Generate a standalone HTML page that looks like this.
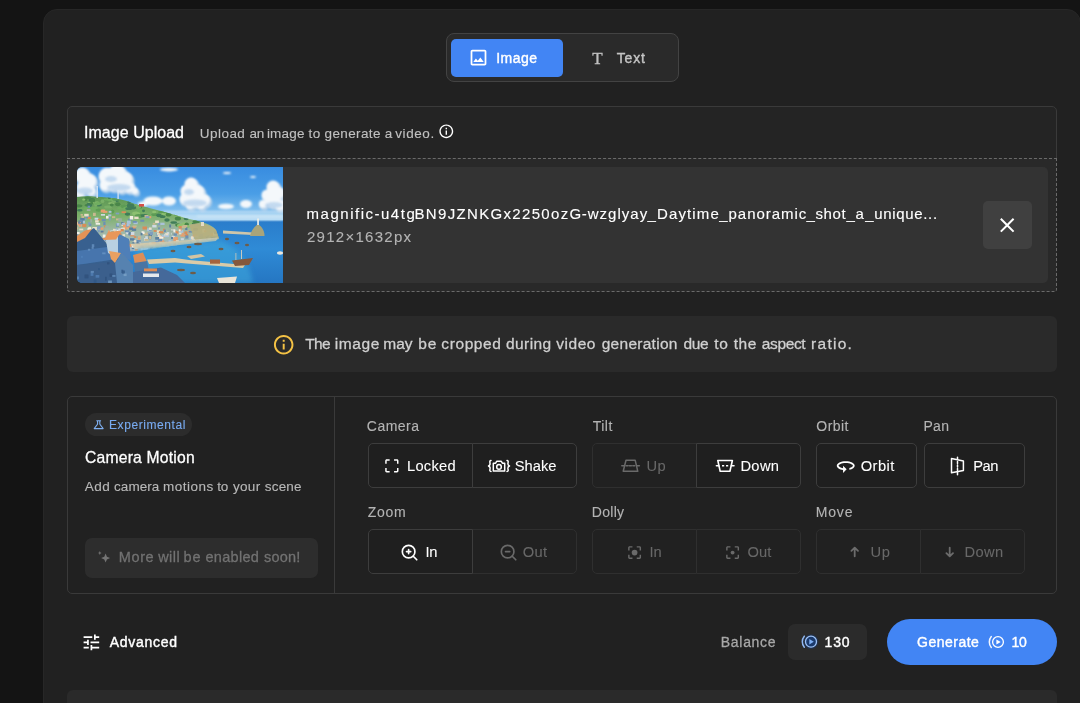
<!DOCTYPE html>
<html lang="en">
<head>
<meta charset="utf-8">
<title>Image to Video</title>
<style>
html,body{margin:0;padding:0;}
body{width:1080px;height:703px;overflow:hidden;background:#141414;position:relative;font-family:"Liberation Sans",sans-serif;}
.b{position:absolute;box-sizing:border-box;}
.t{position:absolute;white-space:pre;font-family:"Liberation Sans",sans-serif;}
svg{position:absolute;overflow:visible;}
.panel{left:43px;top:9px;width:1038px;height:720px;background:#212121;border:1px solid #272727;border-radius:14px;}
.toggle{left:446px;top:33px;width:233px;height:49px;background:#2a2a2a;border:1px solid #434343;border-radius:8px;}
.tog-on{left:451px;top:39px;width:112px;height:38px;background:#4285f4;border-radius:5px;}
.card{border:1px solid #3a3a3a;border-radius:5px;}
.upload{left:67px;top:106px;width:990px;height:186px;background:#242424;}
.dashbox{left:67px;top:158px;width:990px;height:134px;border:1px dashed #6a6a6a;border-radius:0 0 3px 3px;background:#292929;}
.filerow{left:77px;top:167px;width:971px;height:116px;background:#333333;border-radius:5px;}
.xbtn{left:983px;top:201px;width:49px;height:48px;background:#404040;border-radius:5px;}
.warn{left:67px;top:316px;width:990px;height:56px;background:#2a2a2a;border-radius:6px;}
.motion{left:67px;top:396px;width:990px;height:198px;}
.vdiv{left:334px;top:397px;width:1px;height:196px;background:#3a3a3a;}
.pill{left:85px;top:413px;width:107px;height:23px;background:#2c2c2c;border-radius:12px;}
.soon{left:85px;top:538px;width:233px;height:40px;background:#2d2d2d;border-radius:7px;}
.grp{height:45px;border-radius:5px;}
.on{border:1px solid #3d3d3d;background:#1f1f1f;}
.off{border:1px solid #2f2f2f;background:#212121;}
.chip{left:788px;top:624px;width:79px;height:36px;background:#2b2b2b;border-radius:7px;}
.gen{left:887px;top:619px;width:170px;height:46px;background:#4285f4;border-radius:23px;}
.next{left:67px;top:690px;width:990px;height:30px;background:#2a2a2a;border-radius:6px 6px 0 0;}
.tl{position:absolute;left:0;top:0;width:1080px;height:703px;will-change:transform;}
.ln{margin:0;padding:0;height:0;line-height:0;font-size:0;}

</style>
</head>
<body>
<div class="b panel"></div>

<!-- mode toggle -->
<div class="b toggle"></div>
<div class="b tog-on"></div>

<!-- upload card -->
<div class="b card upload"></div>
<div class="b dashbox"></div>
<div class="b filerow"></div>
<div class="b xbtn"></div>

<!-- warning -->
<div class="b warn"></div>

<!-- camera motion card -->
<div class="b card motion"></div>
<div class="b vdiv"></div>
<div class="b pill"></div>
<div class="b soon"></div>

<!-- button groups: row 1 y=443, row 2 y=529 -->
<div class="b grp on"  style="left:368px;top:443px;width:105px;border-radius:5px 0 0 5px;"></div>
<div class="b grp on"  style="left:472px;top:443px;width:105px;border-radius:0 5px 5px 0;"></div>
<div class="b grp off" style="left:592px;top:443px;width:105px;border-radius:5px 0 0 5px;"></div>
<div class="b grp on"  style="left:696px;top:443px;width:105px;border-radius:0 5px 5px 0;"></div>
<div class="b grp on"  style="left:816px;top:443px;width:101px;"></div>
<div class="b grp on"  style="left:924px;top:443px;width:101px;"></div>

<div class="b grp off" style="left:472px;top:529px;width:105px;border-radius:0 5px 5px 0;"></div>
<div class="b grp on"  style="left:368px;top:529px;width:105px;border-radius:5px 0 0 5px;"></div>
<div class="b grp off" style="left:592px;top:529px;width:105px;border-radius:5px 0 0 5px;"></div>
<div class="b grp off" style="left:696px;top:529px;width:105px;border-radius:0 5px 5px 0;"></div>
<div class="b grp off" style="left:816px;top:529px;width:105px;border-radius:5px 0 0 5px;"></div>
<div class="b grp off" style="left:920px;top:529px;width:105px;border-radius:0 5px 5px 0;"></div>

<!-- bottom row -->
<div class="b chip"></div>
<div class="b gen"></div>
<div class="b next"></div>
<!-- ===== thumbnail (harbour town painting) ===== -->
<svg style="left:77px;top:167px;overflow:hidden;border-radius:5px 0 0 5px" width="206" height="116" viewBox="0 0 206 116">
<defs>
<linearGradient id="sky" x1="0" y1="0" x2="0" y2="1"><stop offset="0" stop-color="#388ce0"/><stop offset="0.5" stop-color="#4a9ee6"/><stop offset="0.85" stop-color="#86c2ee"/><stop offset="1" stop-color="#a8d6f4"/></linearGradient>
<linearGradient id="sea" x1="0" y1="0" x2="0" y2="1"><stop offset="0" stop-color="#2a7ccb"/><stop offset="0.45" stop-color="#2f8bd6"/><stop offset="1" stop-color="#2576c2"/></linearGradient>
<linearGradient id="hill" x1="0" y1="0" x2="0" y2="1"><stop offset="0" stop-color="#5a9452"/><stop offset="0.35" stop-color="#7cb06a"/><stop offset="0.6" stop-color="#9db8a4"/><stop offset="1" stop-color="#a9bccc"/></linearGradient>
<filter id="b1" x="-20%" y="-20%" width="140%" height="140%"><feGaussianBlur stdDeviation="0.9"/></filter>
<filter id="b2" x="-20%" y="-20%" width="140%" height="140%"><feGaussianBlur stdDeviation="2.4"/></filter>
<filter id="b05" x="-20%" y="-20%" width="140%" height="140%"><feGaussianBlur stdDeviation="0.5"/></filter>
<clipPath id="hc"><path d="M0 30 C8 28.500 18 29.500 30 30.500 C40 31 48 33 58 37 C74 42 92 45.500 108 51 C122 54.500 134 56 139 63 L142 72 L60 84 L0 86 Z"/></clipPath>
</defs>
<rect width="206" height="54" fill="url(#sky)"/>
<rect y="53.400" width="206" height="63" fill="url(#sea)"/>
<rect x="84" y="47" width="122" height="6.600" fill="#c4e2f6" opacity="0.75" filter="url(#b1)"/>
<g fill="#b4d0ea" filter="url(#b1)">
<circle cx="6.5" cy="10.2" r="8"/>
<circle cx="13.5" cy="16.2" r="8"/>
<circle cx="7.5" cy="22.2" r="7"/>
<circle cx="15.5" cy="26.2" r="5"/>
<circle cx="4.5" cy="29.2" r="4.5"/>
<circle cx="31.5" cy="11.2" r="9"/>
<circle cx="41.5" cy="9.2" r="10"/>
<circle cx="49.5" cy="14.2" r="8"/>
<circle cx="37.5" cy="18.2" r="8"/>
<circle cx="29.5" cy="20.2" r="6"/>
<circle cx="53.5" cy="22.2" r="6"/>
<circle cx="45.5" cy="22.2" r="6"/>
<circle cx="59.5" cy="26.2" r="3.5"/>
<circle cx="115.5" cy="19.2" r="7"/>
<circle cx="111.5" cy="26.2" r="7"/>
<circle cx="121.5" cy="27.2" r="8"/>
<circle cx="109.5" cy="34.2" r="6"/>
<circle cx="118.5" cy="35.2" r="8"/>
<circle cx="128.5" cy="35.2" r="6.5"/>
<circle cx="114.5" cy="40.2" r="4.5"/>
<circle cx="125.5" cy="40.2" r="4.5"/>
<circle cx="197.5" cy="22.2" r="7"/>
<circle cx="202.5" cy="28.2" r="7"/>
<circle cx="191.5" cy="30.2" r="6"/>
<circle cx="197.5" cy="35.2" r="8"/>
<circle cx="187.5" cy="39.2" r="4.5"/>
<circle cx="204.5" cy="40.2" r="6"/>
</g>
<g fill="#f4f8fb" filter="url(#b1)">
<circle cx="5" cy="8" r="7.4"/>
<circle cx="12" cy="14" r="7.4"/>
<circle cx="6" cy="20" r="6.4"/>
<circle cx="14" cy="24" r="4.6"/>
<circle cx="3" cy="27" r="4.1"/>
<circle cx="30" cy="9" r="8.3"/>
<circle cx="40" cy="7" r="9.2"/>
<circle cx="48" cy="12" r="7.4"/>
<circle cx="36" cy="16" r="7.4"/>
<circle cx="28" cy="18" r="5.5"/>
<circle cx="52" cy="20" r="5.5"/>
<circle cx="44" cy="20" r="5.5"/>
<circle cx="58" cy="24" r="3.2"/>
<circle cx="114" cy="17" r="6.4"/>
<circle cx="110" cy="24" r="6.4"/>
<circle cx="120" cy="25" r="7.4"/>
<circle cx="108" cy="32" r="5.5"/>
<circle cx="117" cy="33" r="7.4"/>
<circle cx="127" cy="33" r="6"/>
<circle cx="113" cy="38" r="4.1"/>
<circle cx="124" cy="38" r="4.1"/>
<circle cx="196" cy="20" r="6.4"/>
<circle cx="201" cy="26" r="6.4"/>
<circle cx="190" cy="28" r="5.5"/>
<circle cx="196" cy="33" r="7.4"/>
<circle cx="186" cy="37" r="4.1"/>
<circle cx="203" cy="38" r="5.5"/>
<ellipse cx="149" cy="39.500" rx="8" ry="2.800"/><ellipse cx="169" cy="37" rx="6" ry="4"/><ellipse cx="92" cy="34" rx="7" ry="4.500"/><ellipse cx="76" cy="34" rx="9.500" ry="4.500"/><ellipse cx="66" cy="37" rx="5" ry="2.500"/>
<ellipse cx="92" cy="2.600" rx="9" ry="1.800"/><ellipse cx="150" cy="6" rx="4" ry="1"/><ellipse cx="176" cy="10" rx="3" ry="1"/>
</g>
<g fill="#a4c6e8" opacity="0.6" filter="url(#b1)"><ellipse cx="42" cy="20.500" rx="12" ry="3.500"/><ellipse cx="118" cy="36" rx="12" ry="3.500"/><ellipse cx="197" cy="38" rx="9" ry="3"/><ellipse cx="8" cy="24" rx="8" ry="3.500"/><ellipse cx="112" cy="25" rx="5" ry="3"/><ellipse cx="34" cy="12" rx="6" ry="3"/></g>
<g fill="#d6eaf8" opacity="0.7" filter="url(#b1)"><rect x="86" y="44" width="120" height="2" /><rect x="120" y="48.500" width="86" height="1.800"/></g>
<path d="M0 30 C8 28.500 18 29.500 30 30.500 C40 31 48 33 58 37 C74 42 92 45.500 108 51 C122 54.500 134 56 139 63 L142 72 L60 84 L0 86 Z" fill="url(#hill)" filter="url(#b05)"/>
<g clip-path="url(#hc)" filter="url(#b05)">
<ellipse cx="38.9" cy="34" rx="3.1" ry="1.1" fill="#3f7c58"/>
<ellipse cx="11.3" cy="38.2" rx="3.8" ry="1.3" fill="#4a8648"/>
<ellipse cx="52" cy="35.6" rx="1.7" ry="1.5" fill="#3f7c58"/>
<ellipse cx="14.9" cy="33.1" rx="3.1" ry="2.1" fill="#3f7c58"/>
<ellipse cx="70.3" cy="39.1" rx="2.1" ry="1.7" fill="#5d9c54"/>
<ellipse cx="34.8" cy="33" rx="1.8" ry="1.4" fill="#79b068"/>
<ellipse cx="21.7" cy="38.1" rx="3.1" ry="1.4" fill="#3f7c58"/>
<ellipse cx="85.5" cy="49.5" rx="3" ry="1.6" fill="#3f7c58"/>
<ellipse cx="51.3" cy="38.9" rx="3" ry="1.5" fill="#6fae60"/>
<ellipse cx="29.8" cy="32.5" rx="3.4" ry="1.1" fill="#6fae60"/>
<ellipse cx="63" cy="49.2" rx="3.3" ry="1.3" fill="#4a8648"/>
<ellipse cx="14.2" cy="35.9" rx="3.4" ry="1.2" fill="#8cc070"/>
<ellipse cx="50.6" cy="47.8" rx="1.7" ry="1.7" fill="#6fae60"/>
<ellipse cx="40.8" cy="37.2" rx="2.7" ry="2" fill="#4a8648"/>
<ellipse cx="100.8" cy="58.1" rx="2.7" ry="1.8" fill="#4a8648"/>
<ellipse cx="87.7" cy="46.5" rx="2.9" ry="1.8" fill="#8cc070"/>
<ellipse cx="34.2" cy="36.3" rx="3.2" ry="1" fill="#8cc070"/>
<ellipse cx="42.7" cy="41.2" rx="2.7" ry="1.3" fill="#6fae60"/>
<ellipse cx="15.5" cy="33.5" rx="2.5" ry="2" fill="#4a8648"/>
<ellipse cx="20" cy="35.6" rx="2.2" ry="1.2" fill="#8cc070"/>
<ellipse cx="103.7" cy="49.4" rx="2.5" ry="1.4" fill="#8cc070"/>
<ellipse cx="114.9" cy="49.9" rx="1.9" ry="1.3" fill="#5d9c54"/>
<ellipse cx="1.4" cy="41.6" rx="2" ry="1.3" fill="#5d9c54"/>
<ellipse cx="50.3" cy="39.4" rx="2.9" ry="2.1" fill="#79b068"/>
<ellipse cx="103.1" cy="58.7" rx="3.1" ry="1.9" fill="#8cc070"/>
<ellipse cx="107.9" cy="57.3" rx="3.7" ry="2" fill="#8cc070"/>
<ellipse cx="47.8" cy="39.2" rx="2.7" ry="1.5" fill="#5d9c54"/>
<ellipse cx="8.1" cy="32.9" rx="1.9" ry="1.4" fill="#4a8648"/>
<ellipse cx="12.3" cy="37.9" rx="2.8" ry="2.1" fill="#3f7c58"/>
<ellipse cx="3.1" cy="42.2" rx="3" ry="1.2" fill="#6fae60"/>
<ellipse cx="114.7" cy="56.2" rx="2.7" ry="1.1" fill="#8cc070"/>
<ellipse cx="119.2" cy="55.3" rx="2.7" ry="1.1" fill="#4a8648"/>
<ellipse cx="90" cy="53" rx="2.7" ry="1.8" fill="#3f7c58"/>
<ellipse cx="2.8" cy="43.3" rx="2.8" ry="1.2" fill="#3f7c58"/>
<ellipse cx="109.7" cy="57.4" rx="2.2" ry="1.8" fill="#4a8648"/>
<ellipse cx="83.5" cy="44.9" rx="2.4" ry="1.2" fill="#5d9c54"/>
<ellipse cx="63.9" cy="48" rx="2.3" ry="1.3" fill="#5d9c54"/>
<ellipse cx="96.7" cy="55.5" rx="3.3" ry="1.3" fill="#3f7c58"/>
<ellipse cx="59.1" cy="46.4" rx="4" ry="1.9" fill="#8cc070"/>
<ellipse cx="31.1" cy="39.9" rx="3.9" ry="1.5" fill="#79b068"/>
<ellipse cx="118.6" cy="62" rx="2.4" ry="1.3" fill="#5d9c54"/>
<ellipse cx="56.4" cy="40.3" rx="2.7" ry="2.2" fill="#3f7c58"/>
<ellipse cx="100.9" cy="51.6" rx="3.1" ry="2" fill="#4a8648"/>
<ellipse cx="100.2" cy="46.4" rx="2.5" ry="1.9" fill="#5d9c54"/>
<ellipse cx="57.4" cy="38.2" rx="3.5" ry="1.4" fill="#79b068"/>
<ellipse cx="47.5" cy="39.3" rx="3.9" ry="1.9" fill="#5d9c54"/>
<ellipse cx="119.2" cy="49.1" rx="3" ry="1.6" fill="#79b068"/>
<ellipse cx="17.5" cy="41.6" rx="4" ry="1.8" fill="#6fae60"/>
<ellipse cx="18.7" cy="37.7" rx="1.6" ry="2" fill="#79b068"/>
<ellipse cx="78" cy="47.4" rx="3.8" ry="1.5" fill="#5d9c54"/>
<ellipse cx="99.1" cy="47.5" rx="2.1" ry="1.4" fill="#5d9c54"/>
<ellipse cx="91.6" cy="47.5" rx="2.9" ry="2" fill="#4a8648"/>
<ellipse cx="109.2" cy="51.6" rx="2.6" ry="1.7" fill="#3f7c58"/>
<ellipse cx="50.5" cy="47.1" rx="2.8" ry="1.6" fill="#3f7c58"/>
<ellipse cx="61.3" cy="48.8" rx="3.4" ry="1.7" fill="#5d9c54"/>
<ellipse cx="20.7" cy="36.6" rx="3.3" ry="1.7" fill="#6fae60"/>
<ellipse cx="81.9" cy="48.3" rx="2.7" ry="1.9" fill="#3f7c58"/>
<ellipse cx="6.8" cy="32.7" rx="1.6" ry="1.1" fill="#8cc070"/>
<ellipse cx="67.4" cy="48.5" rx="3.8" ry="1.5" fill="#3f7c58"/>
<ellipse cx="116.8" cy="56.7" rx="2" ry="1.3" fill="#3f7c58"/>
<ellipse cx="64" cy="43.8" rx="3.9" ry="1.8" fill="#6fae60"/>
<ellipse cx="110.7" cy="59.5" rx="2" ry="1.5" fill="#8cc070"/>
<ellipse cx="14.6" cy="36.2" rx="1.7" ry="1.3" fill="#4a8648"/>
<ellipse cx="25.5" cy="34.2" rx="1.8" ry="1.9" fill="#79b068"/>
<ellipse cx="77.2" cy="45" rx="2.1" ry="1.2" fill="#8cc070"/>
<ellipse cx="26.4" cy="43.3" rx="2.5" ry="1.6" fill="#79b068"/>
<ellipse cx="99.9" cy="46.9" rx="2.6" ry="1.6" fill="#6fae60"/>
<ellipse cx="50.6" cy="39.3" rx="1.7" ry="1.4" fill="#6fae60"/>
<ellipse cx="66.5" cy="43.8" rx="1.5" ry="1.4" fill="#3f7c58"/>
<ellipse cx="35.5" cy="44.6" rx="1.8" ry="2.1" fill="#5d9c54"/>
<ellipse cx="116.6" cy="49.7" rx="2.2" ry="1" fill="#5d9c54"/>
<ellipse cx="32.5" cy="32.3" rx="2.6" ry="2.1" fill="#6fae60"/>
<ellipse cx="48.7" cy="41.4" rx="2.8" ry="1.6" fill="#6fae60"/>
<ellipse cx="10.7" cy="30.8" rx="3.2" ry="1.5" fill="#4a8648"/>
<ellipse cx="32.3" cy="30.7" rx="1.7" ry="1.3" fill="#3f7c58"/>
<ellipse cx="102.7" cy="46.2" rx="3.7" ry="1.5" fill="#6fae60"/>
<ellipse cx="119.3" cy="54.6" rx="3.8" ry="1.7" fill="#4a8648"/>
<ellipse cx="63.2" cy="40.3" rx="1.8" ry="1.2" fill="#4a8648"/>
<ellipse cx="21.7" cy="43.1" rx="3.1" ry="1.6" fill="#5d9c54"/>
<ellipse cx="34.8" cy="38" rx="1.9" ry="1.4" fill="#4a8648"/>
<ellipse cx="119.3" cy="49.3" rx="1.5" ry="1.6" fill="#5d9c54"/>
<ellipse cx="61.7" cy="40.1" rx="2.6" ry="1.8" fill="#79b068"/>
<ellipse cx="51.9" cy="41.5" rx="3.6" ry="1.5" fill="#3f7c58"/>
<ellipse cx="36.9" cy="34.5" rx="2.1" ry="1.2" fill="#79b068"/>
<ellipse cx="87.5" cy="44" rx="4" ry="2.2" fill="#5d9c54"/>
<ellipse cx="1.7" cy="38.8" rx="3.7" ry="1.5" fill="#4a8648"/>
<ellipse cx="10.1" cy="41.8" rx="3.7" ry="1.8" fill="#6fae60"/>
<ellipse cx="71.9" cy="48.5" rx="1.6" ry="1.2" fill="#6fae60"/>
<ellipse cx="53.5" cy="38.6" rx="3.9" ry="2.2" fill="#3f7c58"/>
<ellipse cx="38.8" cy="32.3" rx="3.7" ry="1.3" fill="#5d9c54"/>
<rect x="-1.8" y="60.3" width="3.2" height="2" fill="#c8b890"/>
<rect x="108.2" y="60.3" width="2.2" height="2.8" fill="#5b7f9e"/>
<rect x="1.2" y="56.8" width="3.4" height="2.7" fill="#a9c2d8"/>
<rect x="91.4" y="77" width="2.9" height="2.3" fill="#f2efe6"/>
<rect x="19.2" y="74.1" width="1.9" height="3.3" fill="#c8b890"/>
<rect x="87.1" y="77.3" width="2.2" height="2.6" fill="#c8b890"/>
<rect x="78.7" y="79.1" width="3.7" height="3.2" fill="#9ab0a0"/>
<rect x="133.8" y="77.4" width="1.9" height="2.9" fill="#cfd9e2"/>
<rect x="51.5" y="66.2" width="1.9" height="2.7" fill="#7f9ec0"/>
<rect x="67.5" y="48" width="3.9" height="2.6" fill="#c8b890"/>
<rect x="11.1" y="66.4" width="3.1" height="3.2" fill="#d98c58"/>
<rect x="31.3" y="75.7" width="3.6" height="2.5" fill="#5b7f9e"/>
<rect x="8.9" y="80.9" width="1.9" height="2.9" fill="#7f9ec0"/>
<rect x="9" y="48.9" width="3.9" height="2.2" fill="#6c8fb4"/>
<rect x="16.9" y="64.6" width="4.5" height="1.8" fill="#7f9ec0"/>
<rect x="94" y="65.2" width="3.1" height="2.5" fill="#cfd9e2"/>
<rect x="139" y="76" width="2" height="2.5" fill="#d98c58"/>
<rect x="63.2" y="78.8" width="3.1" height="2.1" fill="#7f9ec0"/>
<rect x="128.2" y="82.7" width="2.1" height="3.1" fill="#d98c58"/>
<rect x="133.3" y="65.8" width="3.2" height="3.4" fill="#e6a070"/>
<rect x="30.9" y="80.6" width="1.9" height="1.6" fill="#f2efe6"/>
<rect x="94.8" y="68.7" width="3" height="2.4" fill="#cfd9e2"/>
<rect x="117.3" y="57.7" width="4.1" height="1.8" fill="#7f9ec0"/>
<rect x="99.2" y="81.7" width="2.8" height="2.4" fill="#6c8fb4"/>
<rect x="8.8" y="81.4" width="4.2" height="2.2" fill="#e9dfc8"/>
<rect x="116.5" y="67.7" width="2.5" height="2.1" fill="#c8b890"/>
<rect x="42.8" y="76.7" width="3" height="1.7" fill="#9ab0a0"/>
<rect x="54.8" y="80.3" width="2.4" height="1.8" fill="#5b7f9e"/>
<rect x="62" y="76.8" width="2.6" height="1.7" fill="#c8b890"/>
<rect x="16.1" y="64.2" width="2.6" height="3.1" fill="#9ab0a0"/>
<rect x="34.9" y="72.3" width="3.4" height="2.4" fill="#a9c2d8"/>
<rect x="113.3" y="74.1" width="2.7" height="3.1" fill="#5b7f9e"/>
<rect x="17.8" y="51.4" width="2.8" height="1.8" fill="#7f9ec0"/>
<rect x="50.3" y="78.1" width="1.9" height="3.3" fill="#5b7f9e"/>
<rect x="56.8" y="69.2" width="2.7" height="1.7" fill="#d98c58"/>
<rect x="79.5" y="65.8" width="3.3" height="3.2" fill="#7f9ec0"/>
<rect x="11.1" y="80.4" width="3.6" height="2.5" fill="#d98c58"/>
<rect x="118.5" y="81.5" width="1.9" height="3" fill="#f2efe6"/>
<rect x="135.5" y="74.5" width="4.4" height="3.5" fill="#c8b890"/>
<rect x="119.5" y="83.5" width="2.1" height="1.9" fill="#c8b890"/>
<rect x="136" y="65.5" width="3.8" height="3.3" fill="#f2efe6"/>
<rect x="10.1" y="76.1" width="2.2" height="2.7" fill="#e9dfc8"/>
<rect x="89.7" y="65.1" width="2.5" height="2.9" fill="#cfd9e2"/>
<rect x="12.1" y="56.7" width="2.3" height="2.1" fill="#6c8fb4"/>
<rect x="-1.8" y="66.9" width="2.6" height="2.2" fill="#7f9ec0"/>
<rect x="65.5" y="59.5" width="4.5" height="3" fill="#d98c58"/>
<rect x="5.9" y="51.5" width="3.6" height="1.8" fill="#7f9ec0"/>
<rect x="92.8" y="82.2" width="1.9" height="2.3" fill="#5b7f9e"/>
<rect x="49.4" y="63.9" width="2.6" height="3.3" fill="#cfd9e2"/>
<rect x="27.1" y="83" width="4.1" height="2.1" fill="#7f9ec0"/>
<rect x="35.6" y="80.4" width="3.5" height="2.8" fill="#7f9ec0"/>
<rect x="66.9" y="81.5" width="3.5" height="3.4" fill="#e9dfc8"/>
<rect x="28.2" y="83.1" width="1.9" height="1.7" fill="#5b7f9e"/>
<rect x="61.8" y="75.5" width="2.1" height="1.8" fill="#a9c2d8"/>
<rect x="44.8" y="54.6" width="3.9" height="1.7" fill="#9ab0a0"/>
<rect x="101" y="80.3" width="3" height="1.8" fill="#cfd9e2"/>
<rect x="37.7" y="60.9" width="2.1" height="3.5" fill="#7f9ec0"/>
<rect x="52" y="76.9" width="4.1" height="1.8" fill="#f2efe6"/>
<rect x="25.8" y="67.5" width="2.7" height="3.1" fill="#f2efe6"/>
<rect x="2.3" y="61.6" width="3.9" height="1.7" fill="#e9dfc8"/>
<rect x="63.9" y="78.4" width="2.3" height="1.7" fill="#6c8fb4"/>
<rect x="46.1" y="58.6" width="3.5" height="2.1" fill="#e6a070"/>
<rect x="129.2" y="69.6" width="3.5" height="3.2" fill="#cfd9e2"/>
<rect x="1.4" y="53.5" width="4.5" height="3.5" fill="#5b7f9e"/>
<rect x="110.2" y="82.2" width="2.2" height="2.6" fill="#e9dfc8"/>
<rect x="112" y="78.4" width="4" height="2.8" fill="#e6a070"/>
<rect x="120.3" y="72.6" width="3.5" height="2.6" fill="#5b7f9e"/>
<rect x="104.9" y="65.2" width="1.9" height="2.7" fill="#e6a070"/>
<rect x="20.8" y="62.4" width="2" height="2.8" fill="#7f9ec0"/>
<rect x="11.7" y="65.3" width="3.1" height="2.1" fill="#5b7f9e"/>
<rect x="63.5" y="80.9" width="3.3" height="3.1" fill="#cfd9e2"/>
<rect x="108.7" y="67" width="2.5" height="2.1" fill="#d98c58"/>
<rect x="26.3" y="55" width="2.2" height="3.4" fill="#6c8fb4"/>
<rect x="32.9" y="67.4" width="2.1" height="2.5" fill="#e9dfc8"/>
<rect x="12.5" y="64.3" width="4.2" height="3.4" fill="#e9dfc8"/>
<rect x="122.5" y="67.1" width="3.5" height="3.3" fill="#7f9ec0"/>
<rect x="130.1" y="71.4" width="3.1" height="2.1" fill="#9ab0a0"/>
<rect x="86" y="61.7" width="2.2" height="2" fill="#d98c58"/>
<rect x="3.4" y="74.4" width="4.1" height="3.2" fill="#5b7f9e"/>
<rect x="94.3" y="61.7" width="2.4" height="3.2" fill="#c8b890"/>
<rect x="66.7" y="66.1" width="3.7" height="1.9" fill="#c8b890"/>
<rect x="10.9" y="49.8" width="2.9" height="2.2" fill="#d98c58"/>
<rect x="57.3" y="49.6" width="4.3" height="2.4" fill="#e9dfc8"/>
<rect x="120.7" y="83.9" width="2.4" height="3.1" fill="#7f9ec0"/>
<rect x="131.8" y="73" width="2.1" height="1.8" fill="#6c8fb4"/>
<rect x="123.4" y="72.8" width="1.8" height="2.7" fill="#9ab0a0"/>
<rect x="112.5" y="70.2" width="4.4" height="3.1" fill="#a9c2d8"/>
<rect x="18.7" y="55.9" width="4.4" height="1.8" fill="#f2efe6"/>
<rect x="105" y="79.4" width="2.6" height="3.3" fill="#e9dfc8"/>
<rect x="136.5" y="74.4" width="4.4" height="2.4" fill="#6c8fb4"/>
<rect x="95.7" y="81.4" width="4.2" height="2.8" fill="#6c8fb4"/>
<rect x="118.2" y="80.5" width="2.4" height="2.4" fill="#c8b890"/>
<rect x="20.2" y="59.4" width="4.5" height="3.2" fill="#7f9ec0"/>
<rect x="3.8" y="67.9" width="1.9" height="3.3" fill="#cfd9e2"/>
<rect x="53.4" y="66.5" width="4" height="2.9" fill="#d98c58"/>
<rect x="80.7" y="68" width="3.1" height="2.5" fill="#e9dfc8"/>
<rect x="-1.5" y="83.5" width="3.1" height="2.8" fill="#f2efe6"/>
<rect x="116.8" y="80.1" width="2" height="2.3" fill="#e6a070"/>
<rect x="11" y="62.9" width="1.9" height="2.9" fill="#cfd9e2"/>
<rect x="128.9" y="69.9" width="2" height="3.1" fill="#5b7f9e"/>
<rect x="90.7" y="78.7" width="2" height="2.8" fill="#cfd9e2"/>
<rect x="25.5" y="83.4" width="4.5" height="3.4" fill="#a9c2d8"/>
<rect x="95.4" y="77.3" width="4.1" height="2.8" fill="#d98c58"/>
<rect x="20.5" y="80.4" width="4.1" height="1.9" fill="#c8b890"/>
<rect x="134.9" y="74.3" width="3.5" height="2.1" fill="#e6a070"/>
<rect x="3.2" y="50.8" width="4.4" height="3" fill="#5b7f9e"/>
<rect x="22" y="76.4" width="3.3" height="2.9" fill="#e6a070"/>
<rect x="135.2" y="73.7" width="3.7" height="3.4" fill="#d98c58"/>
<rect x="139" y="77.5" width="4" height="2.1" fill="#e6a070"/>
<rect x="80" y="65.8" width="3" height="2" fill="#e9dfc8"/>
<rect x="40.1" y="67.6" width="4.5" height="3.3" fill="#9ab0a0"/>
<rect x="125.2" y="78.8" width="2.4" height="2.2" fill="#9ab0a0"/>
<rect x="59.4" y="69" width="2.2" height="2.1" fill="#9ab0a0"/>
<rect x="41.1" y="67.9" width="3" height="2.2" fill="#a9c2d8"/>
<rect x="27" y="70.7" width="2.2" height="3.5" fill="#7f9ec0"/>
<rect x="98.5" y="70.4" width="2.2" height="2.9" fill="#d98c58"/>
<rect x="55.1" y="59.4" width="3.6" height="2.7" fill="#e6a070"/>
<rect x="82.5" y="72.7" width="3.2" height="2.6" fill="#a9c2d8"/>
<rect x="55.7" y="58.4" width="4" height="1.6" fill="#c8b890"/>
<rect x="91.3" y="61.6" width="3.3" height="2.9" fill="#9ab0a0"/>
<rect x="89.1" y="79.4" width="2.7" height="2.2" fill="#e9dfc8"/>
<rect x="139.2" y="79.2" width="3.3" height="2.4" fill="#5b7f9e"/>
<rect x="103.8" y="71.2" width="3.1" height="2.1" fill="#cfd9e2"/>
<rect x="35.1" y="71.9" width="4.3" height="3.5" fill="#d98c58"/>
<rect x="99.1" y="65" width="3" height="3.2" fill="#c8b890"/>
<rect x="136" y="70.3" width="4.3" height="1.8" fill="#c8b890"/>
<rect x="0.2" y="54.8" width="3.9" height="3.5" fill="#e6a070"/>
<rect x="25.3" y="61.2" width="2.9" height="3.3" fill="#9ab0a0"/>
<rect x="117.5" y="74.1" width="3.3" height="1.6" fill="#e9dfc8"/>
<rect x="60.1" y="75.8" width="2.7" height="2" fill="#6c8fb4"/>
<rect x="81.1" y="72.2" width="1.9" height="1.8" fill="#6c8fb4"/>
<rect x="129.9" y="70.8" width="1.9" height="1.7" fill="#9ab0a0"/>
<rect x="88" y="76.3" width="2" height="2.8" fill="#e6a070"/>
<rect x="26.3" y="82.5" width="3.7" height="3.4" fill="#5b7f9e"/>
<rect x="13.2" y="52.1" width="1.9" height="3.3" fill="#9ab0a0"/>
<rect x="10.4" y="75.1" width="3.1" height="1.9" fill="#9ab0a0"/>
<rect x="27.1" y="58.3" width="1.9" height="2.1" fill="#d98c58"/>
<rect x="4.9" y="75.4" width="4" height="2.8" fill="#f2efe6"/>
<rect x="118.9" y="76.1" width="3" height="2.5" fill="#cfd9e2"/>
<rect x="47.2" y="74.6" width="2.4" height="3.3" fill="#cfd9e2"/>
<rect x="79.6" y="63.3" width="3.3" height="2.2" fill="#e9dfc8"/>
<rect x="-1.4" y="65" width="4" height="2" fill="#f2efe6"/>
<rect x="82.1" y="82.9" width="3.4" height="1.9" fill="#7f9ec0"/>
<rect x="131.3" y="79.7" width="4.6" height="2.7" fill="#cfd9e2"/>
<rect x="87.2" y="66.4" width="2.9" height="3.4" fill="#cfd9e2"/>
<rect x="57.9" y="73.3" width="2.6" height="2.5" fill="#c8b890"/>
<rect x="69.2" y="65.3" width="2.5" height="2.5" fill="#c8b890"/>
<rect x="82.4" y="75.8" width="1.9" height="2.8" fill="#c8b890"/>
<rect x="20.1" y="78.5" width="3.9" height="1.9" fill="#f2efe6"/>
<rect x="95.8" y="64.3" width="2.7" height="2.9" fill="#7f9ec0"/>
<rect x="70.1" y="61.4" width="4.1" height="2.8" fill="#a9c2d8"/>
<rect x="136.4" y="79.1" width="2.8" height="2.1" fill="#7f9ec0"/>
<rect x="34.7" y="82.5" width="2.3" height="2.9" fill="#7f9ec0"/>
<rect x="52.6" y="83.5" width="3.9" height="2.5" fill="#7f9ec0"/>
<rect x="13.5" y="80.9" width="4.3" height="2.5" fill="#e9dfc8"/>
<rect x="54.7" y="77.7" width="3.2" height="2.9" fill="#f2efe6"/>
<rect x="1.1" y="54.6" width="1.8" height="2.1" fill="#5b7f9e"/>
<rect x="97.6" y="74" width="4.2" height="2.9" fill="#9ab0a0"/>
<rect x="123" y="79.6" width="4.2" height="3" fill="#9ab0a0"/>
<rect x="15.6" y="62.5" width="3.8" height="3.4" fill="#7f9ec0"/>
<rect x="109.1" y="77.7" width="2.5" height="2.4" fill="#f2efe6"/>
<rect x="0.8" y="79" width="3.7" height="3.3" fill="#9ab0a0"/>
<rect x="44.6" y="44.3" width="4.3" height="1.8" fill="#d98c58"/>
<rect x="75.2" y="57.9" width="4.4" height="2.6" fill="#cfd9e2"/>
<rect x="118.3" y="72.3" width="3.1" height="1.6" fill="#e6a070"/>
<rect x="72.1" y="66.7" width="2.4" height="3" fill="#5b7f9e"/>
<rect x="71" y="82.2" width="3.5" height="2.9" fill="#d98c58"/>
<rect x="37" y="62.8" width="3" height="2.4" fill="#9ab0a0"/>
<rect x="48" y="58.5" width="3.9" height="3.5" fill="#c8b890"/>
<rect x="136" y="83.9" width="3.1" height="1.9" fill="#cfd9e2"/>
<rect x="113" y="76.1" width="3.4" height="2.1" fill="#a9c2d8"/>
<rect x="48.1" y="72.5" width="4.1" height="2.5" fill="#d98c58"/>
<rect x="105.9" y="76" width="3.1" height="3.2" fill="#7f9ec0"/>
<rect x="36" y="61.8" width="3" height="2" fill="#e9dfc8"/>
<rect x="112.4" y="79.7" width="3.6" height="2.2" fill="#f2efe6"/>
<rect x="58.8" y="73" width="2.8" height="3.5" fill="#5b7f9e"/>
<rect x="6.1" y="77.9" width="4" height="1.9" fill="#e6a070"/>
<rect x="133.2" y="77.7" width="2.1" height="1.9" fill="#7f9ec0"/>
<rect x="24.4" y="63.7" width="2.4" height="2.4" fill="#c8b890"/>
<rect x="21.8" y="80.2" width="4" height="2.9" fill="#c8b890"/>
<rect x="109.9" y="80.5" width="3.7" height="2.7" fill="#f2efe6"/>
<rect x="57.5" y="78.9" width="3.4" height="2.6" fill="#a9c2d8"/>
<rect x="97.5" y="64.2" width="3.5" height="3.1" fill="#a9c2d8"/>
<rect x="117.4" y="72.5" width="3.7" height="3.3" fill="#e6a070"/>
<rect x="58.5" y="84" width="2.3" height="2.3" fill="#9ab0a0"/>
<rect x="2.1" y="69.7" width="4.4" height="2.3" fill="#cfd9e2"/>
<rect x="70.5" y="69" width="1.9" height="3" fill="#9ab0a0"/>
<rect x="16" y="45.8" width="2.8" height="3.2" fill="#c8b890"/>
<rect x="107.4" y="64.4" width="3" height="2.7" fill="#d98c58"/>
<rect x="39.6" y="78.4" width="3.2" height="2.1" fill="#c8b890"/>
<rect x="47" y="55.7" width="2.1" height="2" fill="#d98c58"/>
<rect x="16.1" y="83.1" width="4.6" height="2.4" fill="#c8b890"/>
<rect x="123.8" y="74.8" width="2.6" height="1.6" fill="#7f9ec0"/>
<rect x="114.7" y="72.4" width="2" height="2.6" fill="#c8b890"/>
<rect x="84.9" y="74" width="3.7" height="2.8" fill="#9ab0a0"/>
<rect x="9.8" y="42.1" width="3.6" height="1.9" fill="#9ab0a0"/>
<rect x="23.7" y="42.6" width="4.4" height="2.9" fill="#e6a070"/>
<rect x="98.8" y="80.8" width="1.9" height="1.6" fill="#6c8fb4"/>
<rect x="89.1" y="82.4" width="3.4" height="1.7" fill="#cfd9e2"/>
<rect x="107.9" y="70.4" width="2.9" height="1.7" fill="#9ab0a0"/>
<rect x="53" y="71.2" width="4.5" height="2.6" fill="#5b7f9e"/>
<rect x="125.2" y="76.6" width="1.8" height="2.9" fill="#cfd9e2"/>
<rect x="29" y="48.9" width="2.6" height="2.7" fill="#f2efe6"/>
<rect x="102.2" y="62.9" width="4" height="3" fill="#a9c2d8"/>
<rect x="101.6" y="59" width="3.8" height="2.5" fill="#d98c58"/>
<rect x="6.6" y="79.9" width="3.5" height="2.4" fill="#d98c58"/>
<rect x="101.6" y="62" width="3.2" height="1.7" fill="#e6a070"/>
<rect x="132.7" y="79" width="2.3" height="3.5" fill="#cfd9e2"/>
<rect x="49.6" y="72.8" width="3" height="2.4" fill="#f2efe6"/>
<rect x="132.2" y="80.1" width="2.6" height="1.7" fill="#9ab0a0"/>
<rect x="97.9" y="80" width="3.5" height="3.6" fill="#a9c2d8"/>
<rect x="83.4" y="64.5" width="4.3" height="2.4" fill="#9ab0a0"/>
<rect x="51.4" y="77" width="3.1" height="3" fill="#e6a070"/>
<rect x="35.4" y="63.6" width="4.1" height="3.4" fill="#e9dfc8"/>
<rect x="39" y="51.5" width="4.6" height="1.9" fill="#c8b890"/>
<rect x="95.2" y="82" width="2" height="2.7" fill="#5b7f9e"/>
<rect x="26.5" y="75.3" width="2.5" height="2.8" fill="#9ab0a0"/>
<rect x="54.2" y="75.1" width="3.4" height="1.6" fill="#5b7f9e"/>
<rect x="63.3" y="52.7" width="4" height="2.1" fill="#6c8fb4"/>
<rect x="72" y="61.3" width="2.7" height="2.6" fill="#7f9ec0"/>
<rect x="24.9" y="52" width="3.8" height="2.3" fill="#6c8fb4"/>
<rect x="49" y="77.2" width="2.5" height="3.4" fill="#f2efe6"/>
<rect x="51.1" y="51.6" width="4" height="1.9" fill="#6c8fb4"/>
<rect x="2.3" y="55.7" width="2.1" height="2" fill="#6c8fb4"/>
<rect x="67.1" y="71.3" width="4" height="2.5" fill="#f2efe6"/>
<rect x="106.9" y="80" width="2.5" height="1.7" fill="#7f9ec0"/>
<rect x="139.2" y="72.5" width="1.9" height="2.3" fill="#f2efe6"/>
<rect x="67.1" y="79.7" width="4.2" height="2.9" fill="#cfd9e2"/>
<rect x="31.1" y="47.4" width="3.2" height="2" fill="#a9c2d8"/>
<rect x="50.7" y="57.6" width="2.3" height="3.5" fill="#e6a070"/>
<rect x="6.4" y="67.5" width="4.4" height="2.1" fill="#c8b890"/>
<rect x="98.8" y="75.6" width="2" height="1.9" fill="#e9dfc8"/>
<rect x="131.4" y="78" width="3.5" height="3.1" fill="#cfd9e2"/>
<rect x="64.8" y="64.6" width="2.8" height="2.4" fill="#f2efe6"/>
<rect x="31.9" y="50.5" width="1.8" height="3" fill="#7f9ec0"/>
<rect x="111.4" y="63.2" width="2" height="2.8" fill="#e6a070"/>
<rect x="11.8" y="81.5" width="3.6" height="2.5" fill="#e6a070"/>
<rect x="43.8" y="56.6" width="2.8" height="2.3" fill="#e9dfc8"/>
<rect x="23.6" y="63.7" width="3" height="1.9" fill="#5b7f9e"/>
<rect x="56.5" y="54.9" width="4.2" height="2.3" fill="#a9c2d8"/>
<rect x="35" y="49.2" width="3.2" height="1.9" fill="#c8b890"/>
<rect x="6.1" y="80.3" width="2.4" height="2.6" fill="#d98c58"/>
<rect x="14.9" y="75.3" width="3" height="2.1" fill="#7f9ec0"/>
<rect x="125.3" y="62" width="2.6" height="3.6" fill="#e9dfc8"/>
<rect x="60.8" y="68.9" width="3" height="3.2" fill="#c8b890"/>
<rect x="38.7" y="61.4" width="2.9" height="2.2" fill="#a9c2d8"/>
<rect x="17.6" y="50.7" width="3.8" height="2" fill="#cfd9e2"/>
<rect x="115.7" y="81.7" width="3.9" height="2" fill="#a9c2d8"/>
<rect x="85" y="76.5" width="3.4" height="2" fill="#cfd9e2"/>
<rect x="96.3" y="72.1" width="4.4" height="2.6" fill="#e6a070"/>
<rect x="45.6" y="79.1" width="3.2" height="1.6" fill="#f2efe6"/>
<rect x="16.9" y="71.9" width="3.4" height="3.6" fill="#e9dfc8"/>
<rect x="21.2" y="60" width="1.8" height="2.6" fill="#f2efe6"/>
<rect x="32.8" y="78.3" width="4" height="3.3" fill="#6c8fb4"/>
<rect x="104.7" y="58.5" width="4.5" height="2.6" fill="#c8b890"/>
<rect x="1.6" y="77.1" width="2.5" height="1.8" fill="#6c8fb4"/>
<rect x="23.9" y="47" width="4.1" height="1.7" fill="#cfd9e2"/>
<rect x="129.5" y="79.1" width="4.1" height="2.9" fill="#f2efe6"/>
<rect x="72.3" y="75.7" width="4.2" height="3" fill="#e9dfc8"/>
<rect x="36.8" y="65.4" width="3.9" height="1.8" fill="#cfd9e2"/>
<rect x="55.6" y="53.9" width="4.2" height="1.9" fill="#6c8fb4"/>
<rect x="63.6" y="65.4" width="1.9" height="2.9" fill="#5b7f9e"/>
<rect x="82.8" y="73.4" width="4.5" height="1.7" fill="#e6a070"/>
<rect x="46.1" y="57.2" width="3" height="3.6" fill="#e6a070"/>
<rect x="113.7" y="80.8" width="3.2" height="3.5" fill="#e6a070"/>
<rect x="33.4" y="63.4" width="2.8" height="2.7" fill="#cfd9e2"/>
<rect x="44.1" y="55.2" width="2.4" height="2.4" fill="#5b7f9e"/>
<rect x="108.3" y="82.6" width="4.1" height="3.4" fill="#e9dfc8"/>
<rect x="2.9" y="71" width="3.7" height="2.1" fill="#c8b890"/>
<rect x="3.6" y="47" width="2.3" height="1.7" fill="#c8b890"/>
<rect x="130.3" y="73" width="4.3" height="3.4" fill="#6c8fb4"/>
<rect x="38.9" y="56.4" width="3.3" height="3.3" fill="#6c8fb4"/>
<rect x="96.7" y="63.2" width="3.3" height="2.3" fill="#c8b890"/>
<rect x="41.1" y="66.2" width="1.9" height="2.3" fill="#7f9ec0"/>
<rect x="70.8" y="65.6" width="1.8" height="2.3" fill="#7f9ec0"/>
<rect x="44" y="60.6" width="4.3" height="2" fill="#e9dfc8"/>
<rect x="121.7" y="72.2" width="2.9" height="2.5" fill="#cfd9e2"/>
<rect x="72" y="83.7" width="4.4" height="2.4" fill="#9ab0a0"/>
<rect x="48" y="73.7" width="4.2" height="3.2" fill="#c8b890"/>
<rect x="11.5" y="78.9" width="4.6" height="2.1" fill="#9ab0a0"/>
<rect x="98.6" y="82" width="4.2" height="1.6" fill="#c8b890"/>
<rect x="81.2" y="70.2" width="3.4" height="2.4" fill="#d98c58"/>
<rect x="121.9" y="76" width="3.1" height="2.5" fill="#e6a070"/>
<rect x="39.6" y="62.7" width="2.9" height="2.2" fill="#f2efe6"/>
<rect x="52.1" y="60.5" width="4" height="2.5" fill="#5b7f9e"/>
<rect x="80.6" y="55.6" width="2.7" height="3.3" fill="#7f9ec0"/>
<rect x="78.2" y="70" width="4" height="2.7" fill="#5b7f9e"/>
<rect x="71.5" y="70.1" width="2.9" height="2.3" fill="#6c8fb4"/>
<rect x="94" y="70" width="2" height="2.1" fill="#5b7f9e"/>
<rect x="51.2" y="64.3" width="3.4" height="3.4" fill="#5b7f9e"/>
<rect x="67.1" y="67.2" width="4.6" height="2.3" fill="#c8b890"/>
<rect x="22.9" y="71.7" width="2.8" height="3.5" fill="#c8b890"/>
<rect x="124.1" y="72" width="2.6" height="2.6" fill="#c8b890"/>
<rect x="124.8" y="71.8" width="3.4" height="1.8" fill="#6c8fb4"/>
<rect x="139.1" y="77.6" width="3" height="3.2" fill="#d98c58"/>
<rect x="98.9" y="73.2" width="2.9" height="1.8" fill="#e9dfc8"/>
<rect x="92.9" y="61.9" width="3.3" height="2.1" fill="#9ab0a0"/>
<rect x="125.2" y="74.2" width="2.4" height="2.8" fill="#a9c2d8"/>
<rect x="20.3" y="75.4" width="2.1" height="1.9" fill="#c8b890"/>
<rect x="67.6" y="68.1" width="4" height="2.9" fill="#9ab0a0"/>
<rect x="107.4" y="67.7" width="2.8" height="1.9" fill="#d98c58"/>
<rect x="87.3" y="80.5" width="2" height="2" fill="#6c8fb4"/>
<rect x="52.8" y="49" width="3.4" height="3.5" fill="#f2efe6"/>
<rect x="5.8" y="53.7" width="2.2" height="2.8" fill="#a9c2d8"/>
<rect x="42.7" y="80.8" width="2.7" height="2.8" fill="#f2efe6"/>
<rect x="137.1" y="64.4" width="3.7" height="2.8" fill="#5b7f9e"/>
<rect x="41.9" y="80" width="4" height="2.1" fill="#a9c2d8"/>
<rect x="22.1" y="60.4" width="4.3" height="2.4" fill="#e6a070"/>
<rect x="14.3" y="66.7" width="2.9" height="1.7" fill="#cfd9e2"/>
<rect x="58" y="81.5" width="2.9" height="2.5" fill="#e6a070"/>
<rect x="31.7" y="43.9" width="2.8" height="1.9" fill="#a9c2d8"/>
<rect x="11.2" y="55.2" width="2.2" height="2.5" fill="#7f9ec0"/>
<rect x="20.6" y="59.1" width="2.9" height="3.5" fill="#7f9ec0"/>
<rect x="40.2" y="66.1" width="4.2" height="3" fill="#d98c58"/>
<rect x="82.6" y="68.6" width="3.3" height="2.4" fill="#c8b890"/>
<rect x="28.2" y="79.7" width="3.2" height="2.7" fill="#d98c58"/>
<rect x="102.5" y="78.6" width="3.8" height="1.9" fill="#e9dfc8"/>
<rect x="118.8" y="69" width="2.1" height="2.7" fill="#e6a070"/>
<rect x="112.3" y="78.8" width="3.8" height="1.8" fill="#d98c58"/>
<rect x="15.9" y="73.8" width="2.9" height="3.4" fill="#9ab0a0"/>
<rect x="123.4" y="81.3" width="2.6" height="1.7" fill="#9ab0a0"/>
<rect x="111.5" y="77.3" width="1.9" height="3" fill="#f2efe6"/>
<rect x="33.3" y="78.9" width="3.6" height="2" fill="#cfd9e2"/>
<rect x="36.5" y="70.7" width="3.7" height="2.4" fill="#6c8fb4"/>
<rect x="21" y="51.8" width="2.9" height="1.7" fill="#d98c58"/>
<rect x="87.4" y="82.6" width="2.4" height="2.6" fill="#c8b890"/>
<rect x="34.2" y="64" width="2.8" height="1.6" fill="#9ab0a0"/>
<rect x="38.7" y="45.7" width="3.5" height="1.7" fill="#7f9ec0"/>
<rect x="108.4" y="68.4" width="3" height="3.1" fill="#6c8fb4"/>
<rect x="115.7" y="67.5" width="4.4" height="2.4" fill="#e6a070"/>
<rect x="96.2" y="77.7" width="3.6" height="2.5" fill="#e9dfc8"/>
<rect x="94.1" y="62.3" width="4.2" height="3.2" fill="#f2efe6"/>
<rect x="106.2" y="58" width="4.1" height="2.1" fill="#c8b890"/>
<rect x="21.2" y="76.3" width="2.5" height="3.5" fill="#a9c2d8"/>
<rect x="48.8" y="64.4" width="2.7" height="1.9" fill="#f2efe6"/>
<rect x="93.2" y="63.3" width="3.2" height="2.5" fill="#9ab0a0"/>
<rect x="47.9" y="59.9" width="2.2" height="2.7" fill="#e6a070"/>
<rect x="131.7" y="78" width="4.5" height="3.3" fill="#5b7f9e"/>
<rect x="49.2" y="56.1" width="2.6" height="2" fill="#d98c58"/>
<rect x="64.5" y="64.3" width="2" height="1.6" fill="#f2efe6"/>
<rect x="9.9" y="73.8" width="3.4" height="1.8" fill="#f2efe6"/>
<rect x="133.9" y="74.3" width="2.7" height="2.3" fill="#cfd9e2"/>
<rect x="89.5" y="74.5" width="3.6" height="2.1" fill="#7f9ec0"/>
<rect x="9.1" y="75" width="2.9" height="1.9" fill="#e6a070"/>
<rect x="24.4" y="71.1" width="4.4" height="1.9" fill="#d98c58"/>
<rect x="103.4" y="67.4" width="4.1" height="2.2" fill="#e6a070"/>
<rect x="17.4" y="81.2" width="2.5" height="1.7" fill="#cfd9e2"/>
<rect x="78.5" y="73.9" width="3.8" height="3.4" fill="#7f9ec0"/>
<rect x="68.2" y="69.2" width="2.6" height="2.8" fill="#cfd9e2"/>
<rect x="18.1" y="53.2" width="3.6" height="2.4" fill="#e9dfc8"/>
<rect x="118.8" y="72.9" width="2.8" height="1.7" fill="#6c8fb4"/>
<rect x="119.5" y="79.7" width="2.6" height="2.9" fill="#c8b890"/>
<rect x="98.9" y="81.5" width="1.8" height="3.5" fill="#a9c2d8"/>
<rect x="60.9" y="70.8" width="2.3" height="1.8" fill="#e6a070"/>
<rect x="71.4" y="67.2" width="3.6" height="1.9" fill="#5b7f9e"/>
<rect x="134.6" y="77" width="2" height="3" fill="#6c8fb4"/>
<rect x="91.5" y="73" width="2.8" height="2.9" fill="#a9c2d8"/>
<rect x="40.5" y="60.9" width="1.9" height="2" fill="#9ab0a0"/>
<rect x="103" y="76.9" width="3.4" height="2.7" fill="#5b7f9e"/>
<rect x="49.1" y="57.6" width="2.5" height="2.1" fill="#7f9ec0"/>
<rect x="75.8" y="55.9" width="2.5" height="1.8" fill="#c8b890"/>
<rect x="93.2" y="76.9" width="3.1" height="2.7" fill="#cfd9e2"/>
<rect x="102.5" y="82" width="4.2" height="3" fill="#f2efe6"/>
<rect x="17.1" y="65.5" width="4.1" height="3.5" fill="#9ab0a0"/>
<rect x="138.7" y="79.2" width="4.1" height="2.4" fill="#a9c2d8"/>
<rect x="11.2" y="60" width="2.9" height="1.7" fill="#e9dfc8"/>
<rect x="0.2" y="69.1" width="2.6" height="3" fill="#5b7f9e"/>
<rect x="127" y="63.4" width="2.4" height="1.8" fill="#e6a070"/>
<rect x="21.9" y="75" width="3.9" height="3" fill="#d98c58"/>
<rect x="15.4" y="60" width="4.5" height="3" fill="#e9dfc8"/>
<rect x="113.9" y="69.3" width="2.7" height="2.8" fill="#e9dfc8"/>
<rect x="129.4" y="77.8" width="2.3" height="2.5" fill="#6c8fb4"/>
<rect x="60.5" y="77.9" width="2" height="2.1" fill="#a9c2d8"/>
<rect x="76.7" y="63" width="2.9" height="1.9" fill="#d98c58"/>
<rect x="74.5" y="75.5" width="4.5" height="1.6" fill="#e6a070"/>
<rect x="139.2" y="74.8" width="1.9" height="3.3" fill="#cfd9e2"/>
<rect x="23.9" y="77.7" width="2.9" height="2.6" fill="#a9c2d8"/>
<rect x="96.4" y="70.1" width="4.5" height="2.6" fill="#e6a070"/>
<rect x="44.8" y="56" width="3.4" height="1.7" fill="#a9c2d8"/>
<rect x="114.3" y="78.2" width="3.1" height="3.5" fill="#e6a070"/>
<rect x="-1.1" y="68.5" width="1.9" height="2.5" fill="#6c8fb4"/>
<rect x="4.4" y="48.9" width="2.6" height="2.1" fill="#c8b890"/>
<rect x="138.8" y="72" width="3.4" height="1.9" fill="#e9dfc8"/>
<rect x="127.9" y="82.2" width="2.4" height="2.5" fill="#6c8fb4"/>
<rect x="88.1" y="66.8" width="4" height="3.3" fill="#a9c2d8"/>
<rect x="94.7" y="65.7" width="3.9" height="2.6" fill="#9ab0a0"/>
<rect x="32.8" y="79.8" width="2.7" height="3" fill="#9ab0a0"/>
<rect x="43.9" y="83.6" width="2.8" height="2.1" fill="#7f9ec0"/>
<rect x="124.2" y="77.5" width="2.9" height="3.1" fill="#a9c2d8"/>
<rect x="81.3" y="58.1" width="2.5" height="2.7" fill="#9ab0a0"/>
<rect x="131.1" y="70.8" width="3.4" height="1.8" fill="#a9c2d8"/>
<rect x="41.2" y="61.4" width="4.5" height="3" fill="#cfd9e2"/>
<rect x="117.1" y="68.7" width="4.3" height="2.7" fill="#a9c2d8"/>
<rect x="87" y="62.5" width="1.9" height="2.5" fill="#6c8fb4"/>
<rect x="38.1" y="66.9" width="2.5" height="1.7" fill="#a9c2d8"/>
<rect x="83.3" y="55.7" width="4.3" height="2.3" fill="#a9c2d8"/>
<rect x="-1.3" y="55.3" width="1.8" height="2.2" fill="#e9dfc8"/>
<rect x="28.1" y="58.8" width="3.6" height="2.4" fill="#9ab0a0"/>
<rect x="111.7" y="63.8" width="4" height="1.8" fill="#6c8fb4"/>
<rect x="45.5" y="67.2" width="2.5" height="2.5" fill="#e9dfc8"/>
<rect x="1.7" y="57.4" width="2.7" height="2.4" fill="#e6a070"/>
<rect x="73.2" y="79.7" width="2.8" height="2.3" fill="#9ab0a0"/>
<rect x="81.6" y="72" width="3.5" height="2.3" fill="#6c8fb4"/>
<rect x="34.6" y="74.3" width="4" height="2.2" fill="#c8b890"/>
<rect x="136.8" y="73.9" width="3.3" height="3.5" fill="#a9c2d8"/>
<rect x="33.9" y="68.7" width="4.1" height="3.6" fill="#a9c2d8"/>
<rect x="138.5" y="69.1" width="2.1" height="1.7" fill="#a9c2d8"/>
<rect x="15.4" y="67.1" width="4" height="2.1" fill="#6c8fb4"/>
<rect x="49.9" y="53.6" width="3.9" height="3.4" fill="#a9c2d8"/>
<rect x="73" y="64.7" width="3" height="3.3" fill="#7f9ec0"/>
<rect x="88.3" y="66.2" width="3.1" height="2.2" fill="#e9dfc8"/>
<rect x="13.3" y="74.5" width="3.6" height="2.4" fill="#e6a070"/>
<rect x="6.5" y="67.9" width="4.4" height="3.5" fill="#9ab0a0"/>
<rect x="98.7" y="64.2" width="2.7" height="2.5" fill="#d98c58"/>
<rect x="40.4" y="83.8" width="3.4" height="1.9" fill="#d98c58"/>
<rect x="10.6" y="38.7" width="2.5" height="2.2" fill="#6c8fb4"/>
<rect x="82.9" y="69" width="4.3" height="2" fill="#e6a070"/>
<rect x="4.6" y="76" width="3" height="1.9" fill="#d98c58"/>
<rect x="95.3" y="79.4" width="4.4" height="1.9" fill="#d98c58"/>
<rect x="19.4" y="74.6" width="2.3" height="3" fill="#cfd9e2"/>
<rect x="56.8" y="73.1" width="2.9" height="2.3" fill="#e9dfc8"/>
<rect x="81.1" y="60.4" width="1.8" height="1.9" fill="#6c8fb4"/>
<rect x="30.9" y="63.5" width="1.9" height="3.6" fill="#e6a070"/>
<rect x="7.2" y="46.8" width="4.5" height="2.7" fill="#e9dfc8"/>
<rect x="23.4" y="72.8" width="3.9" height="2.6" fill="#cfd9e2"/>
<rect x="73.3" y="79.7" width="2" height="3.5" fill="#7f9ec0"/>
<rect x="101.9" y="65.6" width="2.5" height="1.7" fill="#e9dfc8"/>
<rect x="25.9" y="43.8" width="4.5" height="2.1" fill="#e6a070"/>
<rect x="95.7" y="75.6" width="3.3" height="3" fill="#d98c58"/>
<rect x="54.7" y="61.5" width="4.5" height="2.4" fill="#5b7f9e"/>
<rect x="123.2" y="80.2" width="3.6" height="2.1" fill="#c8b890"/>
<rect x="129.5" y="68.5" width="2.9" height="2.1" fill="#7f9ec0"/>
<rect x="92.2" y="57.5" width="1.9" height="3" fill="#5b7f9e"/>
<rect x="96.6" y="66.5" width="3.3" height="2.2" fill="#6c8fb4"/>
<rect x="-1.9" y="74.9" width="3.2" height="2.8" fill="#5b7f9e"/>
<rect x="31.3" y="71.2" width="2.9" height="3" fill="#5b7f9e"/>
<rect x="136.6" y="69.7" width="4.1" height="1.7" fill="#c8b890"/>
<rect x="92.3" y="82.2" width="2.5" height="3.3" fill="#e6a070"/>
<rect x="72.1" y="68.8" width="2.2" height="3.5" fill="#c8b890"/>
<rect x="49.7" y="56.1" width="2.8" height="2.9" fill="#a9c2d8"/>
<rect x="114.7" y="72.1" width="4.1" height="3.4" fill="#e9dfc8"/>
<rect x="43.7" y="62" width="3" height="2.4" fill="#d98c58"/>
<rect x="51.3" y="62.9" width="3.3" height="2.2" fill="#9ab0a0"/>
<rect x="10.5" y="60.9" width="3.7" height="2.5" fill="#f2efe6"/>
<rect x="101.8" y="62.4" width="1.8" height="1.9" fill="#f2efe6"/>
<rect x="71.9" y="60.5" width="2.8" height="2.4" fill="#e9dfc8"/>
<rect x="81.9" y="64.2" width="4.4" height="2.1" fill="#d98c58"/>
<rect x="116.4" y="61.7" width="4.2" height="2" fill="#5b7f9e"/>
<rect x="134.1" y="70" width="4.4" height="3" fill="#5b7f9e"/>
<rect x="50.1" y="75" width="2.9" height="2.9" fill="#d98c58"/>
<rect x="48" y="63.4" width="4.4" height="2" fill="#6c8fb4"/>
<rect x="50.9" y="73.5" width="2" height="3.1" fill="#5b7f9e"/>
<rect x="53.8" y="65" width="3.6" height="3.2" fill="#cfd9e2"/>
<rect x="82.2" y="69.3" width="4.2" height="2.4" fill="#f2efe6"/>
<rect x="17.2" y="75.2" width="2.5" height="2" fill="#c8b890"/>
<rect x="3.8" y="72.4" width="4" height="3.1" fill="#cfd9e2"/>
<rect x="10.8" y="78.6" width="1.8" height="2.6" fill="#7f9ec0"/>
<rect x="78.1" y="53.5" width="3.8" height="2.6" fill="#e9dfc8"/>
<rect x="76.2" y="77.2" width="2.2" height="2.4" fill="#e9dfc8"/>
<rect x="71.6" y="49.1" width="2.6" height="2.1" fill="#e6a070"/>
<rect x="52.5" y="73.6" width="2.9" height="3.4" fill="#9ab0a0"/>
<rect x="5.3" y="56.9" width="4" height="3.3" fill="#d98c58"/>
<rect x="41.3" y="51.4" width="3.6" height="3.5" fill="#9ab0a0"/>
<rect x="67.4" y="71.9" width="4" height="2" fill="#c8b890"/>
<rect x="92.3" y="77.3" width="2" height="3.5" fill="#e6a070"/>
<rect x="3" y="52.8" width="2.4" height="2" fill="#6c8fb4"/>
<rect x="84.7" y="67.8" width="2.4" height="2" fill="#a9c2d8"/>
<rect x="59.6" y="73.1" width="4.2" height="1.7" fill="#6c8fb4"/>
<rect x="68.6" y="49.2" width="3.9" height="1.9" fill="#7f9ec0"/>
<rect x="93.7" y="76" width="2.4" height="3.3" fill="#a9c2d8"/>
<rect x="108.4" y="77.7" width="3.1" height="2" fill="#cfd9e2"/>
<rect x="133" y="72.7" width="2.5" height="3.4" fill="#9ab0a0"/>
<rect x="58.3" y="80.1" width="2.2" height="1.9" fill="#f2efe6"/>
<rect x="39.7" y="56" width="2.7" height="2.7" fill="#a9c2d8"/>
<rect x="42" y="57.5" width="2.4" height="3.5" fill="#9ab0a0"/>
<rect x="137.2" y="72.6" width="2.9" height="2.9" fill="#7f9ec0"/>
<rect x="91" y="76.4" width="2.2" height="2" fill="#e6a070"/>
<rect x="94.4" y="59" width="2.1" height="3.4" fill="#9ab0a0"/>
<rect x="131.4" y="74.9" width="2.8" height="3.1" fill="#f2efe6"/>
<rect x="124.3" y="82.3" width="2.6" height="2.2" fill="#6c8fb4"/>
<rect x="36.5" y="80.5" width="2.4" height="3.4" fill="#e9dfc8"/>
</g>
<path d="M112 58 C122 55 132 57 139 63 L142 71 L118 73 Z" fill="#b8b07c" opacity="0.9" filter="url(#b05)"/>
<rect x="124" y="55" width="3" height="4" fill="#e4dcc4" filter="url(#b05)"/>
<rect x="62" y="37" width="5" height="2.600" fill="#d6504a" filter="url(#b05)"/>
<rect x="19.500" y="19" width="1.300" height="12" fill="#e2ecf6" filter="url(#b05)"/>
<rect x="40.500" y="23" width="1.200" height="9" fill="#dbe6f2" filter="url(#b05)"/>
<path d="M54 77 C76 75 98 74.500 118 72.500 L141 70.500 L139 74 C116 77 92 79 58 82 Z" fill="#dccdaa" opacity="0.9" filter="url(#b05)"/>
<path d="M58 82 C90 78 120 75.500 142 73 C158 78 172 92 176 116 L62 116 Z" fill="#3ea6da" opacity="0.6" filter="url(#b2)"/>
<path d="M146 63.500 L176 65.500 L176 68 L146 66.500 Z" fill="#cfc6aa" filter="url(#b05)"/>
<path d="M173 69 C174.500 63 178 58.500 181 57.500 C184 58.500 187.500 63 187.500 69 Z" fill="#a9a47a" filter="url(#b05)"/>
<rect x="180.200" y="51.500" width="1.700" height="6.500" fill="#f0f0ea"/>
<g filter="url(#b05)">
<path d="M0 72 L17 61 L34 82 L48 98 L62 116 L0 116 Z" fill="#38608f"/>
<path d="M0 84 L30 80 L40 92 L0 98 Z" fill="#4a7ab4" opacity="0.8"/>
<path d="M0 98 L44 94 L58 116 L0 116 Z" fill="#3a5f8c"/>
<path d="M0 69 L8 63.500 L15 62 L8 71 L0 75 Z" fill="#e39256"/>
<path d="M40 66 L52 72 L54 93 L40 91 Z" fill="#4f7fb8"/>
<path d="M29 73 L41 66 L41 91 L31 86 Z" fill="#b9d0e2"/>
<path d="M27 73 L31 65 L45 63.500 L39 72.500 Z" fill="#e8975a"/>
<path d="M32 84 L44 86 L38 96 L34 92 Z" fill="#eaa060"/>
<path d="M38 96 L45 86 L56 98 L56 116 L40 116 Z" fill="#5782b0"/>
<path d="M56 88 L66 85.500 L70 95 L58 98 Z" fill="#dc8e58"/>
<path d="M57 96 L70 94 L72 104 L58 106 Z" fill="#4a74a4"/>
<path d="M56 105 L84 100.500 L100 108 L108 116 L56 116 Z" fill="#44699a"/>
<rect x="67" y="101.500" width="13" height="2.800" fill="#de8a52"/>
<rect x="66" y="106.500" width="16" height="3.500" fill="#e4e8ee"/>
<rect x="10.9" y="81.8" width="2.3" height="1.9" fill="#6d98c8" opacity="0.7"/>
<rect x="25.2" y="85.4" width="3.4" height="1.9" fill="#6d98c8" opacity="0.7"/>
<rect x="45.3" y="103.5" width="2.6" height="3.4" fill="#2f5584" opacity="0.7"/>
<rect x="21" y="101.2" width="1.9" height="1.9" fill="#2f5584" opacity="0.7"/>
<rect x="18.6" y="108" width="3.7" height="2.7" fill="#5584bc" opacity="0.7"/>
<rect x="14.6" y="80" width="2.1" height="1.9" fill="#6d98c8" opacity="0.7"/>
<rect x="30" y="95.3" width="2.4" height="2" fill="#2c4d78" opacity="0.7"/>
<rect x="31.1" y="113.5" width="3.8" height="3.3" fill="#7fa6cc" opacity="0.7"/>
<rect x="28.1" y="109.8" width="1.5" height="3.9" fill="#2c4d78" opacity="0.7"/>
<rect x="44.3" y="102.7" width="2" height="3.4" fill="#2f5584" opacity="0.7"/>
<rect x="14.8" y="77.2" width="2.5" height="2.8" fill="#6d98c8" opacity="0.7"/>
<rect x="13.6" y="105.4" width="2.8" height="3.5" fill="#5584bc" opacity="0.7"/>
<rect x="4.1" y="88.8" width="1.7" height="2" fill="#5584bc" opacity="0.7"/>
<rect x="13.7" y="103.9" width="3.2" height="1.9" fill="#6d98c8" opacity="0.7"/>
<rect x="0.2" y="109.5" width="1.6" height="2.8" fill="#6d98c8" opacity="0.7"/>
<rect x="35" y="108.1" width="3.5" height="1.7" fill="#6d98c8" opacity="0.7"/>
<rect x="32.6" y="106.5" width="2.7" height="3.4" fill="#2c4d78" opacity="0.7"/>
<rect x="7.6" y="107.5" width="3.8" height="3.8" fill="#2c4d78" opacity="0.7"/>
<rect x="46.6" y="106.5" width="3" height="2.6" fill="#7fa6cc" opacity="0.7"/>
<rect x="16.7" y="112.5" width="2.8" height="3.9" fill="#2f5584" opacity="0.7"/>
</g>
<path d="M70 92.500 L98 91 L112 93 L168 98 L166 101 L110 96.500 L98 95.500 L72 97 Z" fill="#dacba8" filter="url(#b05)"/>
<path d="M110 89 L124 87 L128 89.500 L114 92 Z" fill="#d2c4a2" filter="url(#b05)"/>
<rect x="133" y="92.500" width="10" height="4.200" fill="#a6643c" filter="url(#b05)"/>
<path d="M155 93.500 L176 91 L172 98 L158 99 Z" fill="#84583c" filter="url(#b05)"/>
<rect x="164" y="83" width="0.900" height="9" fill="#d8d0c0"/><rect x="158.500" y="86" width="0.800" height="7" fill="#d0c8b8"/>
<path d="M140 111 L160 109.500 L158 116 L142 116 Z" fill="#e8e4d8" filter="url(#b05)"/>
<ellipse cx="203" cy="86" rx="3" ry="1.700" fill="#ece8de" filter="url(#b05)"/>
<g fill="#6e5c48" filter="url(#b05)">
<ellipse cx="121" cy="77" rx="4" ry="1.200"/>
<ellipse cx="104" cy="103" rx="4" ry="1.200"/>
<ellipse cx="116" cy="106" rx="3" ry="1.200"/>
<ellipse cx="160" cy="76" rx="2.5" ry="1.200"/>
<ellipse cx="144" cy="82" rx="2.5" ry="1.200"/>
<ellipse cx="112" cy="80" rx="2.5" ry="1.200"/>
<ellipse cx="96" cy="84" rx="2.5" ry="1.200"/>
<ellipse cx="150" cy="72" rx="2" ry="1.200"/>
<ellipse cx="170" cy="78" rx="2" ry="1.200"/>
</g>
</svg>
<!-- ===== icons ===== -->
<!-- image icon (toggle) -->
<svg style="left:467.7px;top:46.8px" width="21" height="21" viewBox="0 0 24 24" fill="#ffffff"><path d="M19 5v14H5V5h14m0-2H5c-1.1 0-2 .9-2 2v14c0 1.1.9 2 2 2h14c1.1 0 2-.9 2-2V5c0-1.1-.9-2-2-2zm-4.86 8.860l-3 3.870L9 13.140 6 17h12l-3.860-5.140z"/></svg>
<!-- info icon (header) -->
<svg style="left:438px;top:123px" width="16.6" height="16.6" viewBox="0 0 24 24" fill="#ffffff"><path d="M11 7h2v2h-2zm0 4h2v6h-2zm1-9C6.480 2 2 6.480 2 12s4.480 10 10 10 10-4.480 10-10S17.520 2 12 2zm0 18c-4.410 0-8-3.590-8-8s3.590-8 8-8 8 3.590 8 8-3.590 8-8 8z"/></svg>
<!-- close icon -->
<svg style="left:995.3px;top:212.9px" width="24.4" height="24.4" viewBox="0 0 24 24" fill="#ffffff"><path d="M19 6.410L17.590 5 12 10.590 6.410 5 5 6.410 10.590 12 5 17.590 6.410 19 12 13.410 17.590 19 19 17.590 13.410 12z"/></svg>
<!-- warning/info icon -->
<svg style="left:272.2px;top:333px" width="23.4" height="23.4" viewBox="0 0 24 24" fill="#f4c245"><path d="M11 7h2v2h-2zm0 4h2v6h-2zm1-9C6.480 2 2 6.480 2 12s4.480 10 10 10 10-4.480 10-10S17.520 2 12 2zm0 18c-4.410 0-8-3.590-8-8s3.590-8 8-8 8 3.590 8 8-3.590 8-8 8z"/></svg>
<!-- flask -->
<svg style="left:92.2px;top:417.8px" width="13.4" height="13.4" viewBox="0 0 24 24" fill="#7fb0f2"><path d="M13 11.330L18 18H6l5-6.670V6h2m2.960-2H8.040c-.42 0-.65.480-.39.810L9 6.500v4.170L3.200 18.400c-.49.660-.02 1.600.8 1.600h16c.82 0 1.290-.94.800-1.600L15 10.670V6.500l1.350-1.690c.26-.33.030-.81-.39-.81z"/></svg>
<!-- sparkle -->
<svg style="left:97px;top:550px" width="14" height="14" viewBox="0 0 14 14" fill="#747474"><path d="M8.600 3.600 L9.900 6.800 L13.100 8.100 L9.900 9.400 L8.600 12.600 L7.300 9.400 L4.100 8.100 L7.300 6.800 Z"/><path d="M2.800 1.100 L3.400 2.400 L4.700 3 L3.400 3.600 L2.800 4.900 L2.200 3.600 L0.900 3 L2.200 2.400 Z"/></svg>
<!-- locked (crop free) -->
<svg style="left:382.8px;top:457px" width="17.7" height="17.7" viewBox="0 0 24 24" fill="#ffffff"><path d="M3 5v4h2V5h4V3H5c-1.100 0-2 .9-2 2zm2 10H3v4c0 1.100.9 2 2 2h4v-2H5v-4zm14 4h-4v2h4c1.100 0 2-.9 2-2v-4h-2v4zm0-16h-4v2h4v4h2V5c0-1.100-.9-2-2-2z"/></svg>
<!-- shake: braces + camera -->
<svg style="left:487px;top:459px" width="24" height="14" viewBox="0 0 24 14" fill="none" stroke="#ffffff" stroke-width="1.5" stroke-linecap="round" stroke-linejoin="round">
<path d="M4 1.600 C2.600 1.600 2.700 2.800 3 4 C3.300 5.400 3 6.400 1.500 7 C3 7.600 3.300 8.600 3 10 C2.700 11.200 2.600 12.400 4 12.400"/>
<path d="M20 1.600 C21.400 1.600 21.300 2.800 21 4 C20.700 5.400 21 6.400 22.500 7 C21 7.600 20.700 8.600 21 10 C21.300 11.200 21.400 12.400 20 12.400"/>
<path d="M6.300 4.200 H8.600 L9.700 2.300 H14.300 L15.400 4.200 H17.700 V12 H6.300 Z"/>
<circle cx="12" cy="7.900" r="2.300"/>
</svg>
<!-- tilt up (disabled) -->
<svg style="left:620px;top:458px" width="22" height="16" viewBox="0 0 22 16" fill="none" stroke="#6a6a6a" stroke-width="1.500" stroke-linejoin="round" stroke-linecap="round">
<path d="M6 2.300 H15.200 L17.800 13.300 H3.200 Z"/>
<path d="M1.800 7.800 H4.300 M17 7.800 H19.400"/>
<path d="M6 7.800 H15.200" stroke-dasharray="2 1.400"/>
</svg>
<!-- tilt down -->
<svg style="left:715px;top:458px" width="22" height="16" viewBox="0 0 22 16" fill="none" stroke="#ffffff" stroke-width="1.600" stroke-linejoin="round" stroke-linecap="round">
<path d="M2.800 2.500 H17.400 L14.900 13.300 H5.200 Z"/>
<path d="M1.400 7.800 H3.800 M16.400 7.800 H19"/>
<path d="M7 7.800 H13.800" stroke-dasharray="2.200 1.800" stroke-linecap="butt"/>
</svg>
<!-- orbit (360) -->
<svg style="left:834.9px;top:455.4px" width="21.5" height="21.5" viewBox="0 0 24 24" fill="#ffffff"><path d="M12 7C6.480 7 2 9.240 2 12c0 2.240 2.940 4.130 7 4.770V20l4-4-4-4v2.730c-3.150-.56-5-1.900-5-2.730 0-1.060 3.040-3 8-3s8 1.940 8 3c0 .73-1.460 1.890-4 2.530v2.050c3.530-.77 6-2.530 6-4.580 0-2.760-4.480-5-10-5z"/></svg>
<!-- pan -->
<svg style="left:949px;top:456px" width="17" height="20" viewBox="0 0 17 20" fill="none" stroke="#ffffff" stroke-width="1.500" stroke-linejoin="round" stroke-linecap="round">
<path d="M2.500 2.600 L14.400 5 V14.400 L2.500 16.800 Z"/>
<path d="M8.500 1.200 V3.400 M8.500 16.200 V18.800"/>
<path d="M8.500 5.600 V14.400" stroke-dasharray="2 1.500"/>
</svg>
<!-- zoom in -->
<svg style="left:399.3px;top:541.7px" width="21" height="21" viewBox="0 0 24 24" fill="none" stroke="#ffffff" stroke-width="1.900" stroke-linecap="round"><circle cx="11" cy="11" r="7.200"/><path d="M20.300 20.300 L16.300 16.300 M11 8.600 V13.400 M8.600 11 H13.400"/></svg>
<!-- zoom out (disabled) -->
<svg style="left:497.7px;top:541.7px" width="21" height="21" viewBox="0 0 24 24" fill="none" stroke="#6a6a6a" stroke-width="1.900" stroke-linecap="round"><circle cx="11" cy="11" r="7.200"/><path d="M20.300 20.300 L16.300 16.300 M8.600 11 H13.400"/></svg>
<!-- dolly in (disabled) -->
<svg style="left:625.9px;top:544px" width="17.200" height="17.200" viewBox="0 0 24 24" fill="#6a6a6a"><path d="M3 5v4h2V5h4V3H5c-1.100 0-2 .9-2 2zm2 10H3v4c0 1.100.9 2 2 2h4v-2H5v-4zm14 4h-4v2h4c1.100 0 2-.9 2-2v-4h-2v4zm0-16h-4v2h4v4h2V5c0-1.100-.9-2-2-2z"/><circle cx="12" cy="12" r="4"/></svg>
<!-- dolly out (disabled) -->
<svg style="left:723.8px;top:544px" width="17.200" height="17.200" viewBox="0 0 24 24" fill="#6a6a6a"><path d="M3 5v4h2V5h4V3H5c-1.100 0-2 .9-2 2zm2 10H3v4c0 1.100.9 2 2 2h4v-2H5v-4zm14 4h-4v2h4c1.100 0 2-.9 2-2v-4h-2v4zm0-16h-4v2h4v4h2V5c0-1.100-.9-2-2-2z"/><circle cx="12" cy="12" r="2.700"/></svg>
<!-- move up (disabled) -->
<svg style="left:849px;top:545px" width="12" height="14" viewBox="0 0 12 14" fill="none" stroke="#6c6c6c" stroke-width="1.800" stroke-linecap="round" stroke-linejoin="round"><path d="M5.700 11.300 V2.800 M2.400 5.900 L5.700 2.600 L9 5.900"/></svg>
<!-- move down (disabled) -->
<svg style="left:943.700px;top:545px" width="12" height="14" viewBox="0 0 12 14" fill="none" stroke="#6c6c6c" stroke-width="1.800" stroke-linecap="round" stroke-linejoin="round"><path d="M5.700 2.700 V11.200 M2.400 8.100 L5.700 11.400 L9 8.100"/></svg>
<!-- tune (advanced) -->
<svg style="left:80.9px;top:632.3px" width="20.800" height="20.800" viewBox="0 0 24 24" fill="#ffffff"><path d="M3 17v2h6v-2H3zM3 5v2h10V5H3zm10 16v-2h8v-2h-8v-2h-2v6h2zM7 9v2H3v2h4v2h2V9H7zm14 4v-2H11v2h10zm-6-4h2V7h4V5h-4V3h-2v6z"/></svg>
<!-- coin (balance) -->
<svg style="left:798px;top:632px" width="24" height="20" viewBox="0 0 24 20" fill="none">
<circle cx="13" cy="9.700" r="7.400" fill="#1b3560" opacity="0.55"/>
<path d="M6.300 4.200 A8.600 8.600 0 0 0 6.300 15.200" stroke="#8fb8f4" stroke-width="1.500" stroke-linecap="round"/>
<circle cx="13" cy="9.700" r="5.500" fill="#1b3a6c" stroke="#9cc2f8" stroke-width="1.300"/>
<path d="M11.300 7 L15.800 9.700 L11.300 12.400 Z" fill="#7fb0f4"/>
</svg>
<!-- coin (generate) -->
<svg style="left:985px;top:632px" width="24" height="20" viewBox="0 0 24 20" fill="none">
<path d="M6.300 4.500 A8.600 8.600 0 0 0 6.300 15.500" stroke="#ffffff" stroke-width="1.500" stroke-linecap="round" opacity="0.92"/>
<circle cx="13" cy="10" r="5.400" stroke="#ffffff" stroke-width="1.300"/>
<path d="M11.400 7.400 L15.700 10 L11.400 12.600 Z" fill="#ffffff"/>
</svg>

<!-- ===== text layer ===== -->
<div class="tl">
<div class="t" style="left:496.2px;top:51px;font-size:14.0px;line-height:14.0px;font-weight:400;color:#ffffff;letter-spacing:0.500px;-webkit-text-stroke:0.4px #ffffff">Image</div>
<div class="t" style="left:592.3px;top:50px;font-size:17.0px;line-height:17.0px;font-weight:400;color:#c0c0c0;letter-spacing:0.000px;font-family:'Liberation Serif', serif;-webkit-text-stroke:0.35px #c0c0c0">T</div>
<div class="t" style="left:616.7px;top:51px;font-size:14.0px;line-height:14.0px;font-weight:400;color:#c4c4c4;letter-spacing:0.833px;-webkit-text-stroke:0.4px #c4c4c4">Text</div>
<div class="t" style="left:84.0px;top:125px;font-size:16.0px;line-height:16.0px;font-weight:400;color:#ffffff;letter-spacing:0.036px;-webkit-text-stroke:0.28px #ffffff">Image Upload</div>
<div class="t" style="left:306.9px;top:229px;font-size:15.0px;line-height:15.0px;font-weight:400;color:#b4b4b4;letter-spacing:1.280px;-webkit-text-stroke:0.12px #b4b4b4">2912×1632px</div>
<div class="t" style="left:109.0px;top:419px;font-size:12.0px;line-height:12.0px;font-weight:400;color:#78aaf0;letter-spacing:0.582px;-webkit-text-stroke:0.12px #78aaf0">Experimental</div>
<div class="t" style="left:85.0px;top:450px;font-size:15.7px;line-height:15.7px;font-weight:400;color:#ffffff;letter-spacing:0.200px;-webkit-text-stroke:0.28px #ffffff">Camera Motion</div>
<div class="t" style="left:366.8px;top:419px;font-size:14.0px;line-height:14.0px;font-weight:400;color:#b4b4b4;letter-spacing:0.480px;-webkit-text-stroke:0.12px #b4b4b4">Camera</div>
<div class="t" style="left:592.8px;top:419px;font-size:14.0px;line-height:14.0px;font-weight:400;color:#b4b4b4;letter-spacing:0.467px;-webkit-text-stroke:0.12px #b4b4b4">Tilt</div>
<div class="t" style="left:816.3px;top:419px;font-size:14.0px;line-height:14.0px;font-weight:400;color:#b4b4b4;letter-spacing:0.450px;-webkit-text-stroke:0.12px #b4b4b4">Orbit</div>
<div class="t" style="left:923.4px;top:419px;font-size:14.0px;line-height:14.0px;font-weight:400;color:#b4b4b4;letter-spacing:0.350px;-webkit-text-stroke:0.12px #b4b4b4">Pan</div>
<div class="t" style="left:367.8px;top:505px;font-size:14.0px;line-height:14.0px;font-weight:400;color:#b4b4b4;letter-spacing:0.733px;-webkit-text-stroke:0.12px #b4b4b4">Zoom</div>
<div class="t" style="left:591.8px;top:505px;font-size:14.0px;line-height:14.0px;font-weight:400;color:#b4b4b4;letter-spacing:0.275px;-webkit-text-stroke:0.12px #b4b4b4">Dolly</div>
<div class="t" style="left:815.7px;top:505px;font-size:14.0px;line-height:14.0px;font-weight:400;color:#b4b4b4;letter-spacing:0.833px;-webkit-text-stroke:0.12px #b4b4b4">Move</div>
<div class="t" style="left:407.1px;top:459px;font-size:14.7px;line-height:14.7px;font-weight:400;color:#ffffff;letter-spacing:0.220px;-webkit-text-stroke:0.08px #ffffff">Locked</div>
<div class="t" style="left:514.8px;top:459px;font-size:14.7px;line-height:14.7px;font-weight:400;color:#ffffff;letter-spacing:0.000px;-webkit-text-stroke:0.08px #ffffff">Shake</div>
<div class="t" style="left:646.5px;top:459px;font-size:14.7px;line-height:14.7px;font-weight:400;color:#686868;letter-spacing:0.500px;-webkit-text-stroke:0.08px #686868">Up</div>
<div class="t" style="left:740.4px;top:459px;font-size:14.7px;line-height:14.7px;font-weight:400;color:#ffffff;letter-spacing:0.367px;-webkit-text-stroke:0.08px #ffffff">Down</div>
<div class="t" style="left:860.7px;top:459px;font-size:14.7px;line-height:14.7px;font-weight:400;color:#ffffff;letter-spacing:0.475px;-webkit-text-stroke:0.08px #ffffff">Orbit</div>
<div class="t" style="left:973.2px;top:459px;font-size:14.7px;line-height:14.7px;font-weight:400;color:#ffffff;letter-spacing:-0.450px;-webkit-text-stroke:0.08px #ffffff">Pan</div>
<div class="t" style="left:425.5px;top:545px;font-size:14.7px;line-height:14.7px;font-weight:400;color:#ffffff;letter-spacing:-0.300px;-webkit-text-stroke:0.08px #ffffff">In</div>
<div class="t" style="left:522.8px;top:545px;font-size:14.7px;line-height:14.7px;font-weight:400;color:#686868;letter-spacing:0.300px;-webkit-text-stroke:0.08px #686868">Out</div>
<div class="t" style="left:649.4px;top:545px;font-size:14.7px;line-height:14.7px;font-weight:400;color:#686868;letter-spacing:0.000px;-webkit-text-stroke:0.08px #686868">In</div>
<div class="t" style="left:747.5px;top:545px;font-size:14.7px;line-height:14.7px;font-weight:400;color:#686868;letter-spacing:0.050px;-webkit-text-stroke:0.08px #686868">Out</div>
<div class="t" style="left:870.4px;top:545px;font-size:14.7px;line-height:14.7px;font-weight:400;color:#686868;letter-spacing:0.800px;-webkit-text-stroke:0.08px #686868">Up</div>
<div class="t" style="left:964.5px;top:545px;font-size:14.7px;line-height:14.7px;font-weight:400;color:#686868;letter-spacing:0.333px;-webkit-text-stroke:0.08px #686868">Down</div>
<div class="t" style="left:109.7px;top:635px;font-size:14.0px;line-height:14.0px;font-weight:400;color:#ffffff;letter-spacing:0.743px;-webkit-text-stroke:0.4px #ffffff">Advanced</div>
<div class="t" style="left:720.8px;top:635px;font-size:14.0px;line-height:14.0px;font-weight:400;color:#a8a8a8;letter-spacing:0.700px;-webkit-text-stroke:0.28px #a8a8a8">Balance</div>
<div class="t" style="left:824.4px;top:635px;font-size:14.0px;line-height:14.0px;font-weight:400;color:#ffffff;letter-spacing:0.950px;-webkit-text-stroke:0.4px #ffffff">130</div>
<div class="t" style="left:917.0px;top:635px;font-size:14.0px;line-height:14.0px;font-weight:400;color:#ffffff;letter-spacing:0.500px;-webkit-text-stroke:0.4px #ffffff">Generate</div>
<div class="t" style="left:1011.4px;top:635px;font-size:14.0px;line-height:14.0px;font-weight:400;color:#ffffff;letter-spacing:-0.200px;-webkit-text-stroke:0.4px #ffffff">10</div>
<div class="ln"><span class="t" style="left:199.8px;top:127px;font-size:13.5px;line-height:13.5px;font-weight:400;color:#c0c0c0;letter-spacing:0.460px;-webkit-text-stroke:0.12px #c0c0c0">Upload</span> <span class="t" style="left:249.4px;top:127px;font-size:13.5px;line-height:13.5px;font-weight:400;color:#c0c0c0;letter-spacing:-0.100px;-webkit-text-stroke:0.12px #c0c0c0">an</span> <span class="t" style="left:266.9px;top:127px;font-size:13.5px;line-height:13.5px;font-weight:400;color:#c0c0c0;letter-spacing:0.225px;-webkit-text-stroke:0.12px #c0c0c0">image</span> <span class="t" style="left:308.4px;top:127px;font-size:13.5px;line-height:13.5px;font-weight:400;color:#c0c0c0;letter-spacing:0.600px;-webkit-text-stroke:0.12px #c0c0c0">to</span> <span class="t" style="left:324.6px;top:127px;font-size:13.5px;line-height:13.5px;font-weight:400;color:#c0c0c0;letter-spacing:0.371px;-webkit-text-stroke:0.12px #c0c0c0">generate</span> <span class="t" style="left:384.8px;top:127px;font-size:13.5px;line-height:13.5px;font-weight:400;color:#c0c0c0;letter-spacing:0.000px;-webkit-text-stroke:0.12px #c0c0c0">a</span> <span class="t" style="left:395.2px;top:127px;font-size:13.5px;line-height:13.5px;font-weight:400;color:#c0c0c0;letter-spacing:0.600px;-webkit-text-stroke:0.12px #c0c0c0">video.</span></div>
<div class="ln"><span class="t" style="left:306.6px;top:206px;font-size:15.0px;line-height:15.0px;font-weight:400;color:#ffffff;letter-spacing:1.508px;-webkit-text-stroke:0.12px #ffffff">magnific-u4tg</span><span class="t" style="left:414.5px;top:206px;font-size:15.0px;line-height:15.0px;font-weight:400;color:#ffffff;letter-spacing:1.333px;-webkit-text-stroke:0.12px #ffffff">BN9JZNKGx2250ozG</span><span class="t" style="left:581.7px;top:206px;font-size:15.0px;line-height:15.0px;font-weight:400;color:#ffffff;letter-spacing:1.029px;-webkit-text-stroke:0.12px #ffffff">-wzglyay</span><span class="t" style="left:647.5px;top:206px;font-size:15.0px;line-height:15.0px;font-weight:400;color:#ffffff;letter-spacing:1.129px;-webkit-text-stroke:0.12px #ffffff">_Daytime</span><span class="t" style="left:719.3px;top:206px;font-size:15.0px;line-height:15.0px;font-weight:400;color:#ffffff;letter-spacing:0.944px;-webkit-text-stroke:0.12px #ffffff">_panoramic</span><span class="t" style="left:806.4px;top:206px;font-size:15.0px;line-height:15.0px;font-weight:400;color:#ffffff;letter-spacing:0.667px;-webkit-text-stroke:0.12px #ffffff">_shot_a</span><span class="t" style="left:865.3px;top:206px;font-size:15.0px;line-height:15.0px;font-weight:400;color:#ffffff;letter-spacing:0.656px;-webkit-text-stroke:0.12px #ffffff">_unique...</span></div>
<div class="ln"><span class="t" style="left:305.2px;top:336px;font-size:15.5px;line-height:15.5px;font-weight:400;color:#d0d0d0;letter-spacing:-0.700px;-webkit-text-stroke:0.28px #d0d0d0">The</span> <span class="t" style="left:334.8px;top:336px;font-size:15.5px;line-height:15.5px;font-weight:400;color:#d0d0d0;letter-spacing:0.575px;-webkit-text-stroke:0.28px #d0d0d0">image</span> <span class="t" style="left:383.3px;top:336px;font-size:15.5px;line-height:15.5px;font-weight:400;color:#d0d0d0;letter-spacing:0.000px;-webkit-text-stroke:0.28px #d0d0d0">may</span> <span class="t" style="left:418.3px;top:336px;font-size:15.5px;line-height:15.5px;font-weight:400;color:#d0d0d0;letter-spacing:0.800px;-webkit-text-stroke:0.28px #d0d0d0">be</span> <span class="t" style="left:441.3px;top:336px;font-size:15.5px;line-height:15.5px;font-weight:400;color:#d0d0d0;letter-spacing:0.600px;-webkit-text-stroke:0.28px #d0d0d0">cropped</span> <span class="t" style="left:506.1px;top:336px;font-size:15.5px;line-height:15.5px;font-weight:400;color:#d0d0d0;letter-spacing:0.380px;-webkit-text-stroke:0.28px #d0d0d0">during</span> <span class="t" style="left:556.3px;top:336px;font-size:15.5px;line-height:15.5px;font-weight:400;color:#d0d0d0;letter-spacing:0.525px;-webkit-text-stroke:0.28px #d0d0d0">video</span> <span class="t" style="left:601.7px;top:336px;font-size:15.5px;line-height:15.5px;font-weight:400;color:#d0d0d0;letter-spacing:0.278px;-webkit-text-stroke:0.28px #d0d0d0">generation</span> <span class="t" style="left:683.5px;top:336px;font-size:15.5px;line-height:15.5px;font-weight:400;color:#d0d0d0;letter-spacing:-0.400px;-webkit-text-stroke:0.28px #d0d0d0">due</span> <span class="t" style="left:714.2px;top:336px;font-size:15.5px;line-height:15.5px;font-weight:400;color:#d0d0d0;letter-spacing:0.800px;-webkit-text-stroke:0.28px #d0d0d0">to</span> <span class="t" style="left:733.7px;top:336px;font-size:15.5px;line-height:15.5px;font-weight:400;color:#d0d0d0;letter-spacing:0.550px;-webkit-text-stroke:0.28px #d0d0d0">the</span> <span class="t" style="left:761.8px;top:336px;font-size:15.5px;line-height:15.5px;font-weight:400;color:#d0d0d0;letter-spacing:-0.360px;-webkit-text-stroke:0.28px #d0d0d0">aspect</span> <span class="t" style="left:811.1px;top:336px;font-size:15.5px;line-height:15.5px;font-weight:400;color:#d0d0d0;letter-spacing:1.260px;-webkit-text-stroke:0.28px #d0d0d0">ratio.</span></div>
<div class="ln"><span class="t" style="left:84.7px;top:480px;font-size:13.5px;line-height:13.5px;font-weight:400;color:#b8b8b8;letter-spacing:0.500px;-webkit-text-stroke:0.12px #b8b8b8">Add</span> <span class="t" style="left:114.1px;top:480px;font-size:13.5px;line-height:13.5px;font-weight:400;color:#b8b8b8;letter-spacing:0.020px;-webkit-text-stroke:0.12px #b8b8b8">camera</span> <span class="t" style="left:163.1px;top:480px;font-size:13.5px;line-height:13.5px;font-weight:400;color:#b8b8b8;letter-spacing:0.500px;-webkit-text-stroke:0.12px #b8b8b8">motions</span> <span class="t" style="left:217.3px;top:480px;font-size:13.5px;line-height:13.5px;font-weight:400;color:#b8b8b8;letter-spacing:-0.300px;-webkit-text-stroke:0.12px #b8b8b8">to</span> <span class="t" style="left:232.9px;top:480px;font-size:13.5px;line-height:13.5px;font-weight:400;color:#b8b8b8;letter-spacing:0.333px;-webkit-text-stroke:0.12px #b8b8b8">your</span> <span class="t" style="left:264.8px;top:480px;font-size:13.5px;line-height:13.5px;font-weight:400;color:#b8b8b8;letter-spacing:0.175px;-webkit-text-stroke:0.12px #b8b8b8">scene</span></div>
<div class="ln"><span class="t" style="left:118.8px;top:550px;font-size:14.5px;line-height:14.5px;font-weight:400;color:#727272;letter-spacing:0.600px;-webkit-text-stroke:0.28px #727272">More</span> <span class="t" style="left:158.2px;top:550px;font-size:14.5px;line-height:14.5px;font-weight:400;color:#727272;letter-spacing:0.433px;-webkit-text-stroke:0.28px #727272">will</span> <span class="t" style="left:183.6px;top:550px;font-size:14.5px;line-height:14.5px;font-weight:400;color:#727272;letter-spacing:0.800px;-webkit-text-stroke:0.28px #727272">be</span> <span class="t" style="left:205.5px;top:550px;font-size:14.5px;line-height:14.5px;font-weight:400;color:#727272;letter-spacing:0.283px;-webkit-text-stroke:0.28px #727272">enabled</span> <span class="t" style="left:264.0px;top:550px;font-size:14.5px;line-height:14.5px;font-weight:400;color:#727272;letter-spacing:0.225px;-webkit-text-stroke:0.28px #727272">soon!</span></div>
</div>
</body>
</html>
